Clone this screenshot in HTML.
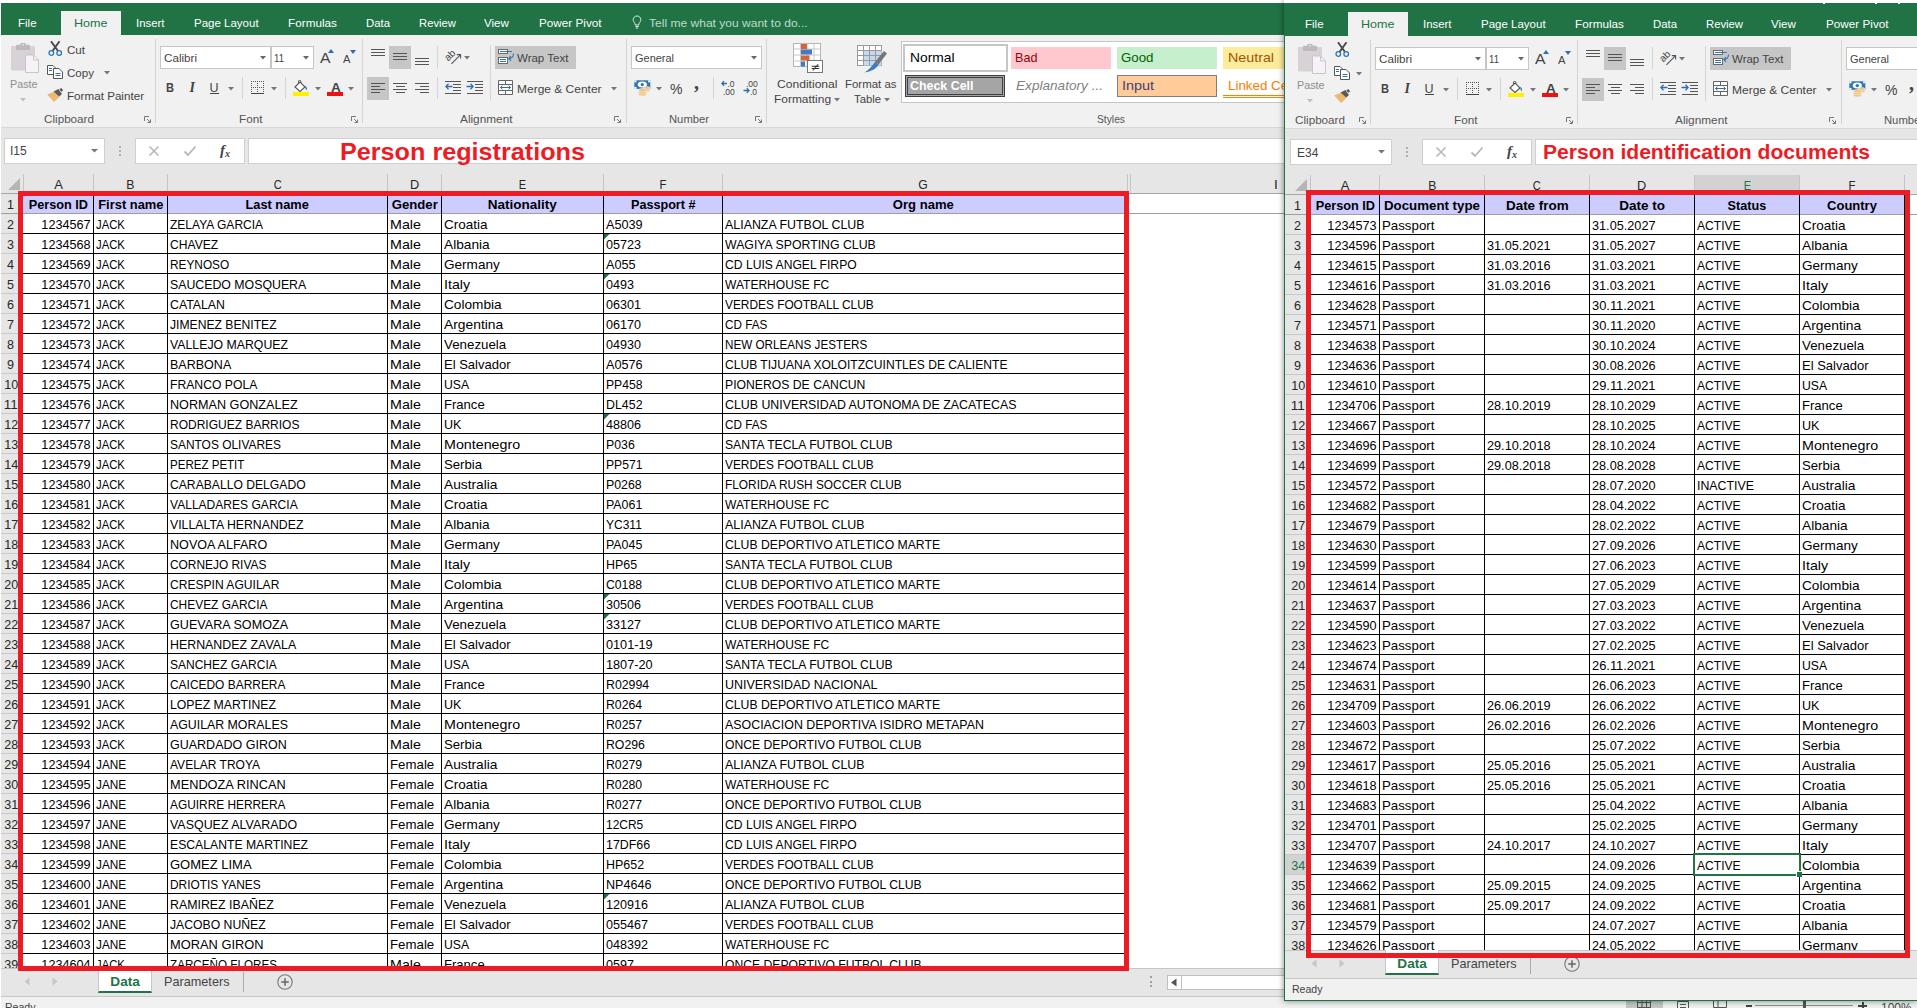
<!DOCTYPE html>
<html><head><meta charset="utf-8"><title>Excel</title><style>
html,body{margin:0;padding:0;background:#fff;}
body{width:1917px;height:1008px;overflow:hidden;position:relative;font-family:"Liberation Sans",sans-serif;color:#444;}
#L{position:absolute;left:0;top:0;width:1917px;height:1008px;overflow:hidden;}
#R{position:absolute;left:1284px;top:0;width:633px;height:1001px;overflow:hidden;box-shadow:0 0 6px rgba(0,0,0,.5);}
.b{position:absolute;box-sizing:border-box;}
.t{position:absolute;white-space:pre;transform-origin:0 50%;}
.c{color:#000;}
</style></head><body>
<div id="L">
<div class="b " style="left:0px;top:0px;width:1917px;height:3px;background:#fff;"></div>
<div class="b " style="left:0px;top:3px;width:1917px;height:32px;background:#217346;"></div>
<div class="b " style="left:0px;top:35px;width:1917px;height:92px;background:#f1f1f1;"></div>
<div class="b " style="left:0px;top:127px;width:1917px;height:1px;background:#d8d8d8;"></div>
<div class="b " style="left:0px;top:128px;width:1917px;height:66px;background:#e6e6e6;"></div>
<div class="b " style="left:61px;top:11px;width:60px;height:24px;background:#f1f1f1;"></div>
<span class="t " style="left:18.00px;top:17.00px;font-size:11.5px;line-height:12px;color:#fff;">File</span>
<span class="t " style="left:74.00px;top:17.00px;font-size:11.5px;line-height:12px;color:#217346;transform:scaleX(1.0922);">Home</span>
<span class="t " style="left:136.00px;top:17.00px;font-size:11.5px;line-height:12px;color:#fff;transform:scaleX(0.9918);">Insert</span>
<span class="t " style="left:194.00px;top:17.00px;font-size:11.5px;line-height:12px;color:#fff;">Page Layout</span>
<span class="t " style="left:287.50px;top:17.00px;font-size:11.5px;line-height:12px;color:#fff;transform:scaleX(1.0225);">Formulas</span>
<span class="t " style="left:365.50px;top:17.00px;font-size:11.5px;line-height:12px;color:#fff;transform:scaleX(0.9884);">Data</span>
<span class="t " style="left:418.50px;top:17.00px;font-size:11.5px;line-height:12px;color:#fff;transform:scaleX(0.9809);">Review</span>
<span class="t " style="left:484.00px;top:17.00px;font-size:11.5px;line-height:12px;color:#fff;transform:scaleX(1.0107);">View</span>
<span class="t " style="left:538.50px;top:17.00px;font-size:11.5px;line-height:12px;color:#fff;transform:scaleX(1.0188);">Power Pivot</span>
<svg class="b" style="left:632px;top:15px" width="10" height="14" viewBox="0 0 10 14"><path d="M5 1C2.8 1 1.2 2.6 1.2 4.7C1.2 6.3 2.2 7.2 2.8 8.2C3.1 8.8 3.2 9.4 3.2 10H6.8C6.8 9.4 6.9 8.8 7.2 8.2C7.8 7.2 8.8 6.3 8.8 4.7C8.8 2.6 7.2 1 5 1ZM3.4 11.5H6.6M3.8 13H6.2" fill="none" stroke="#dfeee6" stroke-width="1"/></svg>
<span class="t " style="left:648.50px;top:17.00px;font-size:11.5px;line-height:12px;color:#bddccb;transform:scaleX(1.0471);">Tell me what you want to do...</span>
<svg class="b" style="left:11px;top:43px" width="29" height="31" viewBox="0 0 29 31"><rect x="0" y="3" width="24" height="24.5" rx="1.2" fill="#d7d2d5"/><rect x="5" y="1.8" width="14" height="5.2" rx="0.8" fill="#bfb9bd"/><rect x="9.3" y="0" width="5.4" height="3" rx="1" fill="#bfb9bd"/><rect x="11" y="1.2" width="2" height="1.3" fill="#e6e2e4"/><path d="M14.5 12H22.5L27.5 17V29.5H14.5Z" fill="#f6f2f7" stroke="#c9c5ca"/><path d="M22.5 12V17H27.5" fill="none" stroke="#c9c5ca"/></svg>
<span class="t " style="left:9.50px;top:78.00px;font-size:11.5px;line-height:12px;color:#8e8e8e;transform:scaleX(0.9357);">Paste</span>
<svg class="b" style="left:19.5px;top:98px" width="6" height="4" viewBox="0 0 6 4"><path d="M0 0H6 L3 3.5Z" fill="#c0c0c0"/></svg>
<svg class="b" style="left:48px;top:41.2px" width="15" height="15" viewBox="0 0 15 15"><path d="M3 0.3L10 10M11.5 0.3L4.5 10" stroke="#484848" stroke-width="1.9" fill="none"/><circle cx="3.3" cy="12" r="2.3" fill="none" stroke="#2e75b6" stroke-width="1.3"/><circle cx="11.2" cy="12" r="2.3" fill="none" stroke="#2e75b6" stroke-width="1.3"/></svg>
<span class="t " style="left:66.50px;top:44.00px;font-size:11.5px;line-height:12px;color:#444444;transform:scaleX(1.0061);">Cut</span>
<svg class="b" style="left:47px;top:65px" width="16" height="14" viewBox="0 0 16 14"><path d="M0.5 0.5H6L8.5 3V9.5H0.5Z" fill="#fff" stroke="#555"/><path d="M6.5 3.5H12L15.5 7V13.5H6.5Z" fill="#fff" stroke="#555"/><path d="M2 3.5H5M2 5.5H5M8.5 8.5H13.5M8.5 10.5H13.5" stroke="#2e6db4" fill="none"/></svg>
<span class="t " style="left:66.50px;top:67.00px;font-size:11.5px;line-height:12px;color:#444444;transform:scaleX(1.0058);">Copy</span>
<svg class="b" style="left:103.5px;top:71px" width="6" height="4" viewBox="0 0 6 4"><path d="M0 0H6 L3 3.5Z" fill="#777"/></svg>
<svg class="b" style="left:47px;top:88px" width="17" height="15" viewBox="0 0 17 15"><path d="M0.2 6.6L8 3.2L12.6 8.8L7 14Z" fill="#ebb96f"/><path d="M6.6 3.4L11.3 0.9L15 6L12.2 8.6Z" fill="#5a5a5a"/><path d="M12.3 1.2L14.3 0L16.2 2.4L14.2 3.8Z" fill="#5a5a5a"/></svg>
<span class="t " style="left:66.50px;top:90.00px;font-size:11.5px;line-height:12px;color:#444444;transform:scaleX(1.0129);">Format Painter</span>
<span class="t " style="left:43.50px;top:113.00px;font-size:11.5px;line-height:12px;color:#555;transform:scaleX(1.0159);">Clipboard</span>
<svg class="b" style="left:144px;top:116px" width="7" height="7" viewBox="0 0 7 7"><path d="M0.5 5V0.5H5M3 3L6 6M6.5 3.5V6.5H3.5" fill="none" stroke="#777" stroke-width="1"/></svg>
<div class="b " style="left:155px;top:39px;width:1px;height:84px;background:#d4d4d4;"></div>
<div class="b " style="left:160px;top:46px;width:111px;height:23px;background:#fff;border:1px solid #c6c6c6;"></div>
<span class="t " style="left:163.50px;top:52.00px;font-size:11.5px;line-height:12px;color:#444444;transform:scaleX(1.0120);">Calibri</span>
<svg class="b" style="left:259.5px;top:56px" width="6" height="4" viewBox="0 0 6 4"><path d="M0 0H6 L3 3.5Z" fill="#666"/></svg>
<div class="b " style="left:271px;top:46px;width:43px;height:23px;background:#fff;border:1px solid #c6c6c6;"></div>
<span class="t " style="left:274.00px;top:52.00px;font-size:11.5px;line-height:12px;color:#444444;transform:scaleX(0.8388);">11</span>
<svg class="b" style="left:302.5px;top:56px" width="6" height="4" viewBox="0 0 6 4"><path d="M0 0H6 L3 3.5Z" fill="#666"/></svg>
<span class="t " style="left:319.50px;top:50.00px;font-size:14.5px;line-height:16px;color:#444;transform:scaleX(1.0856);">A</span>
<svg class="b" style="left:327.5px;top:49px" width="6" height="4" viewBox="0 0 6 4"><path d="M0 4H6L3 0Z" fill="#2e6db4"/></svg>
<span class="t " style="left:343.00px;top:53.00px;font-size:11.5px;line-height:12px;color:#444;transform:scaleX(0.9776);">A</span>
<svg class="b" style="left:349.5px;top:49.5px" width="6" height="4" viewBox="0 0 6 4"><path d="M0 0H6L3 4Z" fill="#2e6db4"/></svg>
<span class="t " style="left:166.00px;top:81.00px;font-size:12.5px;line-height:14px;color:#444;font-weight:bold;transform:scaleX(0.8858);">B</span>
<span class="t " style="left:189.50px;top:80.00px;font-size:14px;line-height:16px;color:#444;font-weight:bold;font-style:italic;font-family:'Liberation Serif',serif;">I</span>
<span class="t " style="left:209.50px;top:81.00px;font-size:12.5px;line-height:14px;color:#444;">U</span>
<div class="b " style="left:209.5px;top:93px;width:9px;height:1px;background:#444;"></div>
<svg class="b" style="left:227.5px;top:86.5px" width="6" height="4" viewBox="0 0 6 4"><path d="M0 0H6 L3 3.5Z" fill="#777"/></svg>
<div class="b " style="left:242px;top:77px;width:1px;height:22px;background:#d4d4d4;"></div>
<svg class="b" style="left:250px;top:80px" width="15" height="15" viewBox="0 0 15 15"><g shape-rendering="crispEdges"><path d="M1 1.5H14M1 7.5H14M1.5 1V13M7.5 1V13M13.5 1V13" stroke="#555" stroke-dasharray="1 1" fill="none"/><path d="M1 13.5H14" stroke="#444" stroke-width="1"/></g></svg>
<svg class="b" style="left:271px;top:86.5px" width="6" height="4" viewBox="0 0 6 4"><path d="M0 0H6 L3 3.5Z" fill="#777"/></svg>
<div class="b " style="left:285px;top:77px;width:1px;height:22px;background:#d4d4d4;"></div>
<svg class="b" style="left:292px;top:79.5px" width="17" height="12" viewBox="0 0 17 12"><path d="M3 7L8 2L13 7L8 11.5Z" fill="#fff" stroke="#555" stroke-width="1.1"/><path d="M6.5 3.5V1.2C6.5 0 8.8 0 8.8 1.2V3" fill="none" stroke="#555"/><path d="M13.2 5.5C14.8 7 15.5 8.5 14.5 10.2C13.5 9.5 13.3 7.5 13.2 5.5Z" fill="#2e6db4"/></svg>
<div class="b " style="left:292.5px;top:92px;width:16px;height:4px;background:#ffef00;"></div>
<svg class="b" style="left:314.5px;top:86.5px" width="6" height="4" viewBox="0 0 6 4"><path d="M0 0H6 L3 3.5Z" fill="#777"/></svg>
<span class="t " style="left:330.50px;top:80.00px;font-size:13.5px;line-height:15px;color:#444;font-weight:bold;transform:scaleX(1.0051);">A</span>
<div class="b " style="left:327px;top:92px;width:16px;height:4px;background:#ee1111;"></div>
<svg class="b" style="left:348px;top:86.5px" width="6" height="4" viewBox="0 0 6 4"><path d="M0 0H6 L3 3.5Z" fill="#777"/></svg>
<span class="t " style="left:239.00px;top:113.00px;font-size:11.5px;line-height:12px;color:#555;transform:scaleX(1.0217);">Font</span>
<svg class="b" style="left:351px;top:116px" width="7" height="7" viewBox="0 0 7 7"><path d="M0.5 5V0.5H5M3 3L6 6M6.5 3.5V6.5H3.5" fill="none" stroke="#777" stroke-width="1"/></svg>
<div class="b " style="left:362px;top:39px;width:1px;height:84px;background:#d4d4d4;"></div>
<div class="b " style="left:371px;top:49px;width:14px;height:1px;background:#555;"></div>
<div class="b " style="left:371px;top:52px;width:14px;height:1px;background:#555;"></div>
<div class="b " style="left:371px;top:55px;width:14px;height:1px;background:#555;"></div>
<div class="b " style="left:389px;top:46px;width:22px;height:23px;background:#c6c6c6;"></div>
<div class="b " style="left:393px;top:53px;width:14px;height:1px;background:#555;"></div>
<div class="b " style="left:393px;top:56px;width:14px;height:1px;background:#555;"></div>
<div class="b " style="left:393px;top:59px;width:14px;height:1px;background:#555;"></div>
<div class="b " style="left:415px;top:58px;width:14px;height:1px;background:#555;"></div>
<div class="b " style="left:415px;top:61px;width:14px;height:1px;background:#555;"></div>
<div class="b " style="left:415px;top:64px;width:14px;height:1px;background:#555;"></div>
<div class="b " style="left:437px;top:46px;width:1px;height:22px;background:#d4d4d4;"></div>
<svg class="b" style="left:444px;top:48px" width="18" height="17" viewBox="0 0 18 17"><text transform="translate(4.2,13.6) rotate(-45)" font-family="Liberation Sans,sans-serif" font-size="10" fill="#444">ab</text><path d="M7.4 15.8L16.6 6.6M12.8 6.6H16.6V10.4" stroke="#555" stroke-width="1.1" fill="none"/></svg>
<svg class="b" style="left:464px;top:56px" width="6" height="4" viewBox="0 0 6 4"><path d="M0 0H6 L3 3.5Z" fill="#777"/></svg>
<div class="b " style="left:490px;top:45px;width:1px;height:55px;background:#d4d4d4;"></div>
<div class="b " style="left:495px;top:46px;width:81px;height:23px;background:#c6c6c6;"></div>
<svg class="b" style="left:498px;top:49px" width="17" height="15" viewBox="0 0 17 15"><rect x="0.5" y="0.5" width="9" height="4" fill="#fff" stroke="#6a6a6a"/><rect x="0.5" y="8.5" width="9" height="6" fill="#fff" stroke="#6a6a6a"/><path d="M2 2.5H13.8M2 10.5H8M2 12.5H8" stroke="#2e75b6" fill="none"/><path d="M15.5 4.5C15.5 8 13.5 9.5 10.8 9.5M13 7.2L10.7 9.5L13 11.8" stroke="#2e75b6" stroke-width="1.1" fill="none"/></svg>
<span class="t " style="left:517.00px;top:52.00px;font-size:11.5px;line-height:12px;color:#444444;">Wrap Text</span>
<div class="b " style="left:367px;top:77px;width:22px;height:23px;background:#c6c6c6;"></div>
<div class="b " style="left:371px;top:83px;width:14px;height:1px;background:#555;"></div>
<div class="b " style="left:393px;top:83px;width:14px;height:1px;background:#555;"></div>
<div class="b " style="left:415px;top:83px;width:14px;height:1px;background:#555;"></div>
<div class="b " style="left:371px;top:86px;width:9px;height:1px;background:#555;"></div>
<div class="b " style="left:395.5px;top:86px;width:9px;height:1px;background:#555;"></div>
<div class="b " style="left:420px;top:86px;width:9px;height:1px;background:#555;"></div>
<div class="b " style="left:371px;top:89px;width:14px;height:1px;background:#555;"></div>
<div class="b " style="left:393px;top:89px;width:14px;height:1px;background:#555;"></div>
<div class="b " style="left:415px;top:89px;width:14px;height:1px;background:#555;"></div>
<div class="b " style="left:371px;top:92px;width:9px;height:1px;background:#555;"></div>
<div class="b " style="left:395.5px;top:92px;width:9px;height:1px;background:#555;"></div>
<div class="b " style="left:420px;top:92px;width:9px;height:1px;background:#555;"></div>
<div class="b " style="left:437px;top:77px;width:1px;height:22px;background:#d4d4d4;"></div>
<div class="b " style="left:444.5px;top:81px;width:16px;height:1px;background:#555;"></div>
<div class="b " style="left:452.5px;top:84px;width:8px;height:1px;background:#555;"></div>
<div class="b " style="left:452.5px;top:87px;width:8px;height:1px;background:#555;"></div>
<div class="b " style="left:452.5px;top:90px;width:8px;height:1px;background:#555;"></div>
<div class="b " style="left:444.5px;top:93px;width:16px;height:1px;background:#555;"></div>
<div class="b " style="left:466.5px;top:81px;width:16px;height:1px;background:#555;"></div>
<div class="b " style="left:474.5px;top:84px;width:8px;height:1px;background:#555;"></div>
<div class="b " style="left:474.5px;top:87px;width:8px;height:1px;background:#555;"></div>
<div class="b " style="left:474.5px;top:90px;width:8px;height:1px;background:#555;"></div>
<div class="b " style="left:466.5px;top:93px;width:16px;height:1px;background:#555;"></div>
<svg class="b" style="left:444.5px;top:83px" width="8" height="7" viewBox="0 0 8 7"><path d="M7.5 3.5H1M3.5 0.8L0.8 3.5L3.5 6.2" stroke="#2e6db4" stroke-width="1.3" fill="none"/></svg>
<svg class="b" style="left:466px;top:83px" width="8" height="7" viewBox="0 0 8 7"><path d="M0.5 3.5H7M4.5 0.8L7.2 3.5L4.5 6.2" stroke="#2e6db4" stroke-width="1.3" fill="none"/></svg>
<svg class="b" style="left:497.5px;top:80px" width="16" height="15" viewBox="0 0 16 15"><path d="M0.5 0.5H14.5V14.5H0.5ZM0.5 4.5H14.5M0.5 10.5H14.5M7.5 0.5V4.5M7.5 10.5V14.5" fill="#fff" stroke="#666"/><path d="M2.5 7.5H12.5M4.5 5.7L2.5 7.5L4.5 9.3M10.5 5.7L12.5 7.5L10.5 9.3" stroke="#2e6db4" fill="none"/></svg>
<span class="t " style="left:517.00px;top:83.00px;font-size:11.5px;line-height:12px;color:#444444;transform:scaleX(1.0416);">Merge &amp; Center</span>
<svg class="b" style="left:610.5px;top:86.5px" width="6" height="4" viewBox="0 0 6 4"><path d="M0 0H6 L3 3.5Z" fill="#777"/></svg>
<span class="t " style="left:460.00px;top:113.00px;font-size:11.5px;line-height:12px;color:#555;transform:scaleX(1.0269);">Alignment</span>
<svg class="b" style="left:614px;top:116px" width="7" height="7" viewBox="0 0 7 7"><path d="M0.5 5V0.5H5M3 3L6 6M6.5 3.5V6.5H3.5" fill="none" stroke="#777" stroke-width="1"/></svg>
<div class="b " style="left:626px;top:39px;width:1px;height:84px;background:#d4d4d4;"></div>
<div class="b " style="left:631px;top:46px;width:131px;height:23px;background:#fff;border:1px solid #c6c6c6;"></div>
<span class="t " style="left:634.50px;top:52.00px;font-size:11.5px;line-height:12px;color:#444444;transform:scaleX(0.9538);">General</span>
<svg class="b" style="left:751px;top:56px" width="6" height="4" viewBox="0 0 6 4"><path d="M0 0H6 L3 3.5Z" fill="#666"/></svg>
<svg class="b" style="left:633.5px;top:80px" width="17" height="17" viewBox="0 0 17 17"><rect x="0.3" y="0.3" width="16" height="8.6" fill="#2e75b6"/><ellipse cx="8.3" cy="4.6" rx="4.6" ry="3" fill="#fff"/><circle cx="8.3" cy="4.6" r="1.7" fill="#2e75b6"/><rect x="0.3" y="0.3" width="2.2" height="2" fill="#fff"/><rect x="14.1" y="0.3" width="2.2" height="2" fill="#fff"/><rect x="0.3" y="6.9" width="2.2" height="2" fill="#fff"/><g fill="#f0c27b" stroke="#f1f1f1" stroke-width="0.6"><ellipse cx="12.5" cy="10" rx="3.6" ry="1.5"/><ellipse cx="12.5" cy="8" rx="3.6" ry="1.5"/><ellipse cx="8.5" cy="14.3" rx="4" ry="1.6"/><ellipse cx="8.5" cy="12.2" rx="4" ry="1.6"/><ellipse cx="8.5" cy="10.1" rx="4" ry="1.6"/></g></svg>
<svg class="b" style="left:655.5px;top:87px" width="6" height="4" viewBox="0 0 6 4"><path d="M0 0H6 L3 3.5Z" fill="#777"/></svg>
<span class="t " style="left:670.00px;top:80.00px;font-size:15px;line-height:17px;color:#444;transform:scaleX(0.9368);">%</span>
<span class="t " style="left:694.00px;top:71.00px;font-size:20px;line-height:22px;color:#444;font-weight:bold;font-family:'Liberation Serif',serif;">,</span>
<div class="b " style="left:713px;top:77px;width:1px;height:22px;background:#d4d4d4;"></div>
<svg class="b" style="left:720.5px;top:80px" width="16" height="15" viewBox="0 0 16 15"><path d="M0.8 3.5H6M3 1.2L0.8 3.5L3 5.8" stroke="#2e6db4" stroke-width="1.3" fill="none"/><text x="6.5" y="7" font-family="Liberation Sans,sans-serif" font-size="8.5" fill="#444">.0</text><text x="2" y="14.5" font-family="Liberation Sans,sans-serif" font-size="8.5" fill="#444">.00</text></svg>
<svg class="b" style="left:742.5px;top:80px" width="16" height="15" viewBox="0 0 16 15"><text x="3" y="7" font-family="Liberation Sans,sans-serif" font-size="8.5" fill="#444">.00</text><path d="M0.5 10.5H6M3.8 8.2L6 10.5L3.8 12.8" stroke="#2e6db4" stroke-width="1.3" fill="none"/><text x="7" y="14.5" font-family="Liberation Sans,sans-serif" font-size="8.5" fill="#444">.0</text></svg>
<span class="t " style="left:668.50px;top:113.00px;font-size:11.5px;line-height:12px;color:#555;transform:scaleX(0.9782);">Number</span>
<svg class="b" style="left:755px;top:116px" width="7" height="7" viewBox="0 0 7 7"><path d="M0.5 5V0.5H5M3 3L6 6M6.5 3.5V6.5H3.5" fill="none" stroke="#777" stroke-width="1"/></svg>
<div class="b " style="left:766px;top:39px;width:1px;height:84px;background:#d4d4d4;"></div>
<svg class="b" style="left:792.5px;top:43px" width="31" height="30" viewBox="0 0 31 30"><rect x="0.5" y="0.5" width="27" height="23" fill="#fff" stroke="#b5b5b5"/><path d="M7.5 0.5V23.5M14 0.5V23.5M21 0.5V23.5M0.5 6H27.5M0.5 12H27.5M0.5 18H27.5" stroke="#c8c8c8" fill="none"/><rect x="8" y="1" width="6" height="5" fill="#d9623b"/><rect x="8" y="6.5" width="11" height="5" fill="#3f7cc0"/><rect x="8" y="12.5" width="8.5" height="5" fill="#d9623b"/><rect x="8" y="18.5" width="4" height="5" fill="#3f7cc0"/><rect x="14.5" y="17.5" width="15" height="12" fill="#fff" stroke="#777"/><text x="17.3" y="28" font-family="DejaVu Sans,sans-serif" font-size="12" fill="#333">≠</text></svg>
<span class="t " style="left:776.50px;top:78.00px;font-size:11.5px;line-height:12px;color:#444444;transform:scaleX(1.0516);">Conditional</span>
<span class="t " style="left:773.50px;top:93.00px;font-size:11.5px;line-height:12px;color:#444444;transform:scaleX(1.0375);">Formatting</span>
<svg class="b" style="left:834px;top:98px" width="6" height="4" viewBox="0 0 6 4"><path d="M0 0H6 L3 3.5Z" fill="#777"/></svg>
<svg class="b" style="left:857px;top:45px" width="31" height="29" viewBox="0 0 31 29"><rect x="0.5" y="0.5" width="24" height="20" fill="#fff" stroke="#9a9a9a"/><rect x="6.5" y="5.5" width="18" height="15" fill="#c5d9f1"/><path d="M6.5 0.5V20.5M12.5 0.5V20.5M18.5 0.5V20.5M0.5 5.5H24.5M0.5 10.5H24.5M0.5 15.5H24.5" stroke="#9a9a9a" fill="none"/><path d="M18 17L27 6L30 8.5L21.5 19.5Z" fill="#777"/><path d="M18 17L21.5 19.5C20 23.5 14 26.5 7.5 27.5C12 25 15 21 18 17Z" fill="#3f7cc0"/></svg>
<span class="t " style="left:845.00px;top:78.00px;font-size:11.5px;line-height:12px;color:#444444;transform:scaleX(0.9955);">Format as</span>
<span class="t " style="left:854.00px;top:93.00px;font-size:11.5px;line-height:12px;color:#444444;transform:scaleX(0.9824);">Table</span>
<svg class="b" style="left:883.5px;top:98px" width="6" height="4" viewBox="0 0 6 4"><path d="M0 0H6 L3 3.5Z" fill="#777"/></svg>
<div class="b " style="left:901px;top:41px;width:400px;height:62px;background:#fff;border:1px solid #c6c6c6;"></div>
<div class="b " style="left:903px;top:44px;width:105px;height:28px;background:#fff;border:2px solid #c6c6c6;"></div>
<span class="t " style="left:909.50px;top:50.00px;font-size:13px;line-height:15px;color:#000;transform:scaleX(1.0619);">Normal</span>
<div class="b " style="left:1011px;top:47px;width:100px;height:22px;background:#ffc7ce;"></div>
<span class="t " style="left:1015.00px;top:50.00px;font-size:13px;line-height:15px;color:#9c0006;transform:scaleX(0.9723);">Bad</span>
<div class="b " style="left:1117px;top:47px;width:100px;height:22px;background:#c6efce;"></div>
<span class="t " style="left:1121.00px;top:50.00px;font-size:13px;line-height:15px;color:#006100;transform:scaleX(1.0216);">Good</span>
<div class="b " style="left:1223px;top:47px;width:100px;height:22px;background:#ffeb9c;"></div>
<span class="t " style="left:1227.50px;top:50.00px;font-size:13px;line-height:15px;color:#9c5700;transform:scaleX(1.0973);">Neutral</span>
<div class="b " style="left:905px;top:75px;width:100px;height:22px;background:#a5a5a5;border:3px double #3f3f3f;"></div>
<span class="t " style="left:909.50px;top:78.00px;font-size:13px;line-height:15px;color:#fff;font-weight:bold;transform:scaleX(0.9551);">Check Cell</span>
<span class="t " style="left:1015.50px;top:78.00px;font-size:13px;line-height:15px;color:#7f7f7f;font-style:italic;transform:scaleX(1.0468);">Explanatory ...</span>
<div class="b " style="left:1117px;top:75px;width:100px;height:22px;background:#ffcc99;border:1px solid #7f7f7f;"></div>
<span class="t " style="left:1121.50px;top:78.00px;font-size:13px;line-height:15px;color:#3f3f76;transform:scaleX(1.1064);">Input</span>
<span class="t " style="left:1227.50px;top:78.00px;font-size:13px;line-height:15px;color:#fa7d00;transform:scaleX(1.0257);">Linked Cell</span>
<div class="b " style="left:1223px;top:95px;width:100px;height:3px;border-top:1px solid #ff8001;border-bottom:1px solid #ff8001;"></div>
<span class="t " style="left:1096.50px;top:113.00px;font-size:11.5px;line-height:12px;color:#555;transform:scaleX(0.8942);">Styles</span>
<div class="b " style="left:4px;top:138px;width:101px;height:26px;background:#fff;border:1px solid #d0d0d0;"></div>
<span class="t " style="left:10.00px;top:144.00px;font-size:12px;line-height:14px;color:#444;">I15</span>
<svg class="b" style="left:91px;top:148.5px" width="7" height="4" viewBox="0 0 7 4"><path d="M0 0H7 L3.5 3.5Z" fill="#777"/></svg>
<div class="b " style="left:119px;top:146px;width:2px;height:2px;background:#b0b0b0;"></div>
<div class="b " style="left:119px;top:150px;width:2px;height:2px;background:#b0b0b0;"></div>
<div class="b " style="left:119px;top:154px;width:2px;height:2px;background:#b0b0b0;"></div>
<div class="b " style="left:135px;top:138px;width:110px;height:26px;background:#fff;border:1px solid #d0d0d0;"></div>
<svg class="b" style="left:148px;top:145px" width="12" height="12" viewBox="0 0 12 12"><path d="M1.5 1.5L10.5 10.5M10.5 1.5L1.5 10.5" stroke="#b7b7b7" stroke-width="1.6" fill="none"/></svg>
<svg class="b" style="left:183px;top:145px" width="14" height="12" viewBox="0 0 14 12"><path d="M1.5 6.5L5 10L12.5 1.5" stroke="#b7b7b7" stroke-width="1.8" fill="none"/></svg>
<span class="t " style="left:220.00px;top:142.00px;font-size:15px;line-height:17px;color:#444;font-weight:bold;font-style:italic;font-family:'Liberation Serif',serif;">f</span>
<span class="t " style="left:225.00px;top:148.00px;font-size:10px;line-height:11px;color:#444;font-weight:bold;font-style:italic;font-family:'Liberation Serif',serif;">x</span>
<div class="b " style="left:248px;top:138px;width:1054px;height:26px;background:#fff;border:1px solid #d0d0d0;"></div>
<span class="t " style="left:339.80px;top:139.00px;font-size:23px;line-height:26px;color:#ed1c24;font-weight:bold;transform:scaleX(1.0952);">Person registrations</span>
<div class="b " style="left:23px;top:194px;width:1894px;height:774px;background:#fff;"></div>
<div class="b " style="left:0px;top:194px;width:23px;height:774px;background:#e6e6e6;"></div>
<div class="b " style="left:23px;top:174px;width:1px;height:19px;background:#c4c4c4;"></div>
<div class="b " style="left:93px;top:174px;width:1px;height:19px;background:#c4c4c4;"></div>
<div class="b " style="left:167px;top:174px;width:1px;height:19px;background:#c4c4c4;"></div>
<div class="b " style="left:387px;top:174px;width:1px;height:19px;background:#c4c4c4;"></div>
<div class="b " style="left:441px;top:174px;width:1px;height:19px;background:#c4c4c4;"></div>
<div class="b " style="left:603px;top:174px;width:1px;height:19px;background:#c4c4c4;"></div>
<div class="b " style="left:722px;top:174px;width:1px;height:19px;background:#c4c4c4;"></div>
<div class="b " style="left:1127px;top:174px;width:1px;height:19px;background:#c4c4c4;"></div>
<div class="b " style="left:1130px;top:174px;width:1px;height:19px;background:#c4c4c4;"></div>
<div class="b " style="left:0px;top:193px;width:1917px;height:1px;background:#a6a6a6;"></div>
<svg class="b" style="left:8px;top:178px" width="12" height="12" viewBox="0 0 12 12"><path d="M12 0V12H0Z" fill="#b5b5b5"/></svg>
<span class="t " style="left:54.16px;top:177.00px;font-size:13px;line-height:15px;color:#262626;transform-origin:50% 50%;">A</span>
<span class="t " style="left:126.16px;top:177.00px;font-size:13px;line-height:15px;color:#262626;transform:scaleX(0.9405);transform-origin:50% 50%;">B</span>
<span class="t " style="left:272.80px;top:177.00px;font-size:13px;line-height:15px;color:#262626;transform:scaleX(0.8519);transform-origin:50% 50%;">C</span>
<span class="t " style="left:409.80px;top:177.00px;font-size:13px;line-height:15px;color:#262626;transform:scaleX(0.9834);transform-origin:50% 50%;">D</span>
<span class="t " style="left:518.16px;top:177.00px;font-size:13px;line-height:15px;color:#262626;transform:scaleX(0.8450);transform-origin:50% 50%;">E</span>
<span class="t " style="left:659.03px;top:177.00px;font-size:13px;line-height:15px;color:#262626;transform:scaleX(0.8681);transform-origin:50% 50%;">F</span>
<span class="t " style="left:918.45px;top:177.00px;font-size:13px;line-height:15px;color:#262626;transform:scaleX(0.9366);transform-origin:50% 50%;">G</span>
<span class="t " style="left:1273.70px;top:177.00px;font-size:13px;line-height:15px;color:#262626;transform:scaleX(1.0476);transform-origin:50% 50%;">I</span>
<div class="b " style="left:23px;top:194px;width:1101px;height:19px;background:#ccccff;"></div>
<span class="t " style="left:28.16px;top:197.00px;font-size:13px;line-height:15px;color:#000;font-weight:bold;transform:scaleX(0.9784);transform-origin:50% 50%;">Person ID</span>
<span class="t " style="left:97.62px;top:197.00px;font-size:13px;line-height:15px;color:#000;font-weight:bold;transform:scaleX(0.9936);transform-origin:50% 50%;">First name</span>
<span class="t " style="left:245.34px;top:197.00px;font-size:13px;line-height:15px;color:#000;font-weight:bold;transform:scaleX(0.9852);transform-origin:50% 50%;">Last name</span>
<span class="t " style="left:391.74px;top:197.00px;font-size:13px;line-height:15px;color:#000;font-weight:bold;transform:scaleX(1.0124);transform-origin:50% 50%;">Gender</span>
<span class="t " style="left:489.27px;top:197.00px;font-size:13px;line-height:15px;color:#000;font-weight:bold;transform:scaleX(1.0402);transform-origin:50% 50%;">Nationality</span>
<span class="t " style="left:629.76px;top:197.00px;font-size:13px;line-height:15px;color:#000;font-weight:bold;transform:scaleX(0.9711);transform-origin:50% 50%;">Passport #</span>
<span class="t " style="left:893.16px;top:197.00px;font-size:13px;line-height:15px;color:#000;font-weight:bold;transform:scaleX(1.0051);transform-origin:50% 50%;">Org name</span>
<div class="b " style="left:0px;top:213px;width:23px;height:1px;background:#c8c8c8;"></div>
<div class="b " style="left:23px;top:213px;width:1101px;height:1px;background:#000;"></div>
<span class="t " style="left:7.18px;top:197.00px;font-size:13px;line-height:15px;color:#262626;transform:scaleX(0.9676);transform-origin:50% 50%;">1</span>
<div class="b " style="left:0px;top:233px;width:23px;height:1px;background:#c8c8c8;"></div>
<div class="b " style="left:23px;top:233px;width:1101px;height:1px;background:#000;"></div>
<span class="t " style="left:7.18px;top:217.00px;font-size:13px;line-height:15px;color:#262626;transform:scaleX(0.9676);transform-origin:50% 50%;">2</span>
<span class="t " style="left:40.16px;top:217.00px;font-size:13px;line-height:15px;color:#000;transform:scaleX(0.9735);transform-origin:100% 50%;">1234567</span>
<span class="t " style="left:96.00px;top:217.00px;font-size:13px;line-height:15px;color:#000;transform:scaleX(0.8693);">JACK</span>
<span class="t " style="left:170.00px;top:217.00px;font-size:13px;line-height:15px;color:#000;transform:scaleX(0.9252);">ZELAYA GARCIA</span>
<span class="t " style="left:390.00px;top:217.00px;font-size:13px;line-height:15px;color:#000;transform:scaleX(1.0970);">Male</span>
<span class="t " style="left:444.00px;top:217.00px;font-size:13px;line-height:15px;color:#000;transform:scaleX(1.0376);">Croatia</span>
<span class="t " style="left:606.00px;top:217.00px;font-size:13px;line-height:15px;color:#000;transform:scaleX(0.9751);">A5039</span>
<span class="t " style="left:725.00px;top:217.00px;font-size:13px;line-height:15px;color:#000;transform:scaleX(0.9546);">ALIANZA FUTBOL CLUB</span>
<div class="b " style="left:0px;top:253px;width:23px;height:1px;background:#c8c8c8;"></div>
<div class="b " style="left:23px;top:253px;width:1101px;height:1px;background:#000;"></div>
<span class="t " style="left:7.18px;top:237.00px;font-size:13px;line-height:15px;color:#262626;transform:scaleX(0.9676);transform-origin:50% 50%;">3</span>
<span class="t " style="left:40.16px;top:237.00px;font-size:13px;line-height:15px;color:#000;transform:scaleX(0.9735);transform-origin:100% 50%;">1234568</span>
<span class="t " style="left:96.00px;top:237.00px;font-size:13px;line-height:15px;color:#000;transform:scaleX(0.8693);">JACK</span>
<span class="t " style="left:170.00px;top:237.00px;font-size:13px;line-height:15px;color:#000;transform:scaleX(0.9303);">CHAVEZ</span>
<span class="t " style="left:390.00px;top:237.00px;font-size:13px;line-height:15px;color:#000;transform:scaleX(1.0970);">Male</span>
<span class="t " style="left:444.00px;top:237.00px;font-size:13px;line-height:15px;color:#000;transform:scaleX(1.0526);">Albania</span>
<span class="t " style="left:606.00px;top:237.00px;font-size:13px;line-height:15px;color:#000;transform:scaleX(0.9676);">05723</span>
<span class="t " style="left:725.00px;top:237.00px;font-size:13px;line-height:15px;color:#000;transform:scaleX(0.9456);">WAGIYA SPORTING CLUB</span>
<svg class="b" style="left:604px;top:234px" width="6" height="6" viewBox="0 0 6 6"><path d="M0 0H5.5L0 5.5Z" fill="#1e7145"/></svg>
<div class="b " style="left:0px;top:273px;width:23px;height:1px;background:#c8c8c8;"></div>
<div class="b " style="left:23px;top:273px;width:1101px;height:1px;background:#000;"></div>
<span class="t " style="left:7.18px;top:257.00px;font-size:13px;line-height:15px;color:#262626;transform:scaleX(0.9676);transform-origin:50% 50%;">4</span>
<span class="t " style="left:40.16px;top:257.00px;font-size:13px;line-height:15px;color:#000;transform:scaleX(0.9735);transform-origin:100% 50%;">1234569</span>
<span class="t " style="left:96.00px;top:257.00px;font-size:13px;line-height:15px;color:#000;transform:scaleX(0.8693);">JACK</span>
<span class="t " style="left:170.00px;top:257.00px;font-size:13px;line-height:15px;color:#000;transform:scaleX(0.9111);">REYNOSO</span>
<span class="t " style="left:390.00px;top:257.00px;font-size:13px;line-height:15px;color:#000;transform:scaleX(1.0970);">Male</span>
<span class="t " style="left:444.00px;top:257.00px;font-size:13px;line-height:15px;color:#000;transform:scaleX(1.0424);">Germany</span>
<span class="t " style="left:606.00px;top:257.00px;font-size:13px;line-height:15px;color:#000;transform:scaleX(0.9769);">A055</span>
<span class="t " style="left:725.00px;top:257.00px;font-size:13px;line-height:15px;color:#000;transform:scaleX(0.9330);">CD LUIS ANGEL FIRPO</span>
<div class="b " style="left:0px;top:293px;width:23px;height:1px;background:#c8c8c8;"></div>
<div class="b " style="left:23px;top:293px;width:1101px;height:1px;background:#000;"></div>
<span class="t " style="left:7.18px;top:277.00px;font-size:13px;line-height:15px;color:#262626;transform:scaleX(0.9676);transform-origin:50% 50%;">5</span>
<span class="t " style="left:40.16px;top:277.00px;font-size:13px;line-height:15px;color:#000;transform:scaleX(0.9735);transform-origin:100% 50%;">1234570</span>
<span class="t " style="left:96.00px;top:277.00px;font-size:13px;line-height:15px;color:#000;transform:scaleX(0.8693);">JACK</span>
<span class="t " style="left:170.00px;top:277.00px;font-size:13px;line-height:15px;color:#000;transform:scaleX(0.9478);">SAUCEDO MOSQUERA</span>
<span class="t " style="left:390.00px;top:277.00px;font-size:13px;line-height:15px;color:#000;transform:scaleX(1.0970);">Male</span>
<span class="t " style="left:444.00px;top:277.00px;font-size:13px;line-height:15px;color:#000;transform:scaleX(1.0924);">Italy</span>
<span class="t " style="left:606.00px;top:277.00px;font-size:13px;line-height:15px;color:#000;transform:scaleX(0.9676);">0493</span>
<span class="t " style="left:725.00px;top:277.00px;font-size:13px;line-height:15px;color:#000;transform:scaleX(0.9251);">WATERHOUSE FC</span>
<svg class="b" style="left:604px;top:274px" width="6" height="6" viewBox="0 0 6 6"><path d="M0 0H5.5L0 5.5Z" fill="#1e7145"/></svg>
<div class="b " style="left:0px;top:313px;width:23px;height:1px;background:#c8c8c8;"></div>
<div class="b " style="left:23px;top:313px;width:1101px;height:1px;background:#000;"></div>
<span class="t " style="left:7.18px;top:297.00px;font-size:13px;line-height:15px;color:#262626;transform:scaleX(0.9676);transform-origin:50% 50%;">6</span>
<span class="t " style="left:40.16px;top:297.00px;font-size:13px;line-height:15px;color:#000;transform:scaleX(0.9735);transform-origin:100% 50%;">1234571</span>
<span class="t " style="left:96.00px;top:297.00px;font-size:13px;line-height:15px;color:#000;transform:scaleX(0.8693);">JACK</span>
<span class="t " style="left:170.00px;top:297.00px;font-size:13px;line-height:15px;color:#000;transform:scaleX(0.9475);">CATALAN</span>
<span class="t " style="left:390.00px;top:297.00px;font-size:13px;line-height:15px;color:#000;transform:scaleX(1.0970);">Male</span>
<span class="t " style="left:444.00px;top:297.00px;font-size:13px;line-height:15px;color:#000;transform:scaleX(1.0509);">Colombia</span>
<span class="t " style="left:606.00px;top:297.00px;font-size:13px;line-height:15px;color:#000;transform:scaleX(0.9676);">06301</span>
<span class="t " style="left:725.00px;top:297.00px;font-size:13px;line-height:15px;color:#000;transform:scaleX(0.9134);">VERDES FOOTBALL CLUB</span>
<div class="b " style="left:0px;top:333px;width:23px;height:1px;background:#c8c8c8;"></div>
<div class="b " style="left:23px;top:333px;width:1101px;height:1px;background:#000;"></div>
<span class="t " style="left:7.18px;top:317.00px;font-size:13px;line-height:15px;color:#262626;transform:scaleX(0.9676);transform-origin:50% 50%;">7</span>
<span class="t " style="left:40.16px;top:317.00px;font-size:13px;line-height:15px;color:#000;transform:scaleX(0.9735);transform-origin:100% 50%;">1234572</span>
<span class="t " style="left:96.00px;top:317.00px;font-size:13px;line-height:15px;color:#000;transform:scaleX(0.8693);">JACK</span>
<span class="t " style="left:170.00px;top:317.00px;font-size:13px;line-height:15px;color:#000;transform:scaleX(0.9344);">JIMENEZ BENITEZ</span>
<span class="t " style="left:390.00px;top:317.00px;font-size:13px;line-height:15px;color:#000;transform:scaleX(1.0970);">Male</span>
<span class="t " style="left:444.00px;top:317.00px;font-size:13px;line-height:15px;color:#000;transform:scaleX(1.0646);">Argentina</span>
<span class="t " style="left:606.00px;top:317.00px;font-size:13px;line-height:15px;color:#000;transform:scaleX(0.9676);">06170</span>
<span class="t " style="left:725.00px;top:317.00px;font-size:13px;line-height:15px;color:#000;transform:scaleX(0.8995);">CD FAS</span>
<div class="b " style="left:0px;top:353px;width:23px;height:1px;background:#c8c8c8;"></div>
<div class="b " style="left:23px;top:353px;width:1101px;height:1px;background:#000;"></div>
<span class="t " style="left:7.18px;top:337.00px;font-size:13px;line-height:15px;color:#262626;transform:scaleX(0.9676);transform-origin:50% 50%;">8</span>
<span class="t " style="left:40.16px;top:337.00px;font-size:13px;line-height:15px;color:#000;transform:scaleX(0.9735);transform-origin:100% 50%;">1234573</span>
<span class="t " style="left:96.00px;top:337.00px;font-size:13px;line-height:15px;color:#000;transform:scaleX(0.8693);">JACK</span>
<span class="t " style="left:170.00px;top:337.00px;font-size:13px;line-height:15px;color:#000;transform:scaleX(0.9464);">VALLEJO MARQUEZ</span>
<span class="t " style="left:390.00px;top:337.00px;font-size:13px;line-height:15px;color:#000;transform:scaleX(1.0970);">Male</span>
<span class="t " style="left:444.00px;top:337.00px;font-size:13px;line-height:15px;color:#000;transform:scaleX(1.0247);">Venezuela</span>
<span class="t " style="left:606.00px;top:337.00px;font-size:13px;line-height:15px;color:#000;transform:scaleX(0.9676);">04930</span>
<span class="t " style="left:725.00px;top:337.00px;font-size:13px;line-height:15px;color:#000;transform:scaleX(0.8987);">NEW ORLEANS JESTERS</span>
<div class="b " style="left:0px;top:373px;width:23px;height:1px;background:#c8c8c8;"></div>
<div class="b " style="left:23px;top:373px;width:1101px;height:1px;background:#000;"></div>
<span class="t " style="left:7.18px;top:357.00px;font-size:13px;line-height:15px;color:#262626;transform:scaleX(0.9676);transform-origin:50% 50%;">9</span>
<span class="t " style="left:40.16px;top:357.00px;font-size:13px;line-height:15px;color:#000;transform:scaleX(0.9735);transform-origin:100% 50%;">1234574</span>
<span class="t " style="left:96.00px;top:357.00px;font-size:13px;line-height:15px;color:#000;transform:scaleX(0.8693);">JACK</span>
<span class="t " style="left:170.00px;top:357.00px;font-size:13px;line-height:15px;color:#000;transform:scaleX(0.9639);">BARBONA</span>
<span class="t " style="left:390.00px;top:357.00px;font-size:13px;line-height:15px;color:#000;transform:scaleX(1.0970);">Male</span>
<span class="t " style="left:444.00px;top:357.00px;font-size:13px;line-height:15px;color:#000;">El Salvador</span>
<span class="t " style="left:606.00px;top:357.00px;font-size:13px;line-height:15px;color:#000;transform:scaleX(0.9751);">A0576</span>
<span class="t " style="left:725.00px;top:357.00px;font-size:13px;line-height:15px;color:#000;transform:scaleX(0.9295);">CLUB TIJUANA XOLOITZCUINTLES DE CALIENTE</span>
<div class="b " style="left:0px;top:393px;width:23px;height:1px;background:#c8c8c8;"></div>
<div class="b " style="left:23px;top:393px;width:1101px;height:1px;background:#000;"></div>
<span class="t " style="left:3.57px;top:377.00px;font-size:13px;line-height:15px;color:#262626;transform:scaleX(0.9676);transform-origin:50% 50%;">10</span>
<span class="t " style="left:40.16px;top:377.00px;font-size:13px;line-height:15px;color:#000;transform:scaleX(0.9735);transform-origin:100% 50%;">1234575</span>
<span class="t " style="left:96.00px;top:377.00px;font-size:13px;line-height:15px;color:#000;transform:scaleX(0.8693);">JACK</span>
<span class="t " style="left:170.00px;top:377.00px;font-size:13px;line-height:15px;color:#000;transform:scaleX(0.9365);">FRANCO POLA</span>
<span class="t " style="left:390.00px;top:377.00px;font-size:13px;line-height:15px;color:#000;transform:scaleX(1.0970);">Male</span>
<span class="t " style="left:444.00px;top:377.00px;font-size:13px;line-height:15px;color:#000;transform:scaleX(0.9380);">USA</span>
<span class="t " style="left:606.00px;top:377.00px;font-size:13px;line-height:15px;color:#000;transform:scaleX(0.9348);">PP458</span>
<span class="t " style="left:725.00px;top:377.00px;font-size:13px;line-height:15px;color:#000;transform:scaleX(0.9385);">PIONEROS DE CANCUN</span>
<div class="b " style="left:0px;top:413px;width:23px;height:1px;background:#c8c8c8;"></div>
<div class="b " style="left:23px;top:413px;width:1101px;height:1px;background:#000;"></div>
<span class="t " style="left:4.05px;top:397.00px;font-size:13px;line-height:15px;color:#262626;transform:scaleX(1.0370);transform-origin:50% 50%;">11</span>
<span class="t " style="left:40.16px;top:397.00px;font-size:13px;line-height:15px;color:#000;transform:scaleX(0.9735);transform-origin:100% 50%;">1234576</span>
<span class="t " style="left:96.00px;top:397.00px;font-size:13px;line-height:15px;color:#000;transform:scaleX(0.8693);">JACK</span>
<span class="t " style="left:170.00px;top:397.00px;font-size:13px;line-height:15px;color:#000;transform:scaleX(0.9711);">NORMAN GONZALEZ</span>
<span class="t " style="left:390.00px;top:397.00px;font-size:13px;line-height:15px;color:#000;transform:scaleX(1.0970);">Male</span>
<span class="t " style="left:444.00px;top:397.00px;font-size:13px;line-height:15px;color:#000;transform:scaleX(1.0054);">France</span>
<span class="t " style="left:606.00px;top:397.00px;font-size:13px;line-height:15px;color:#000;transform:scaleX(0.9535);">DL452</span>
<span class="t " style="left:725.00px;top:397.00px;font-size:13px;line-height:15px;color:#000;transform:scaleX(0.9507);">CLUB UNIVERSIDAD AUTONOMA DE ZACATECAS</span>
<div class="b " style="left:0px;top:433px;width:23px;height:1px;background:#c8c8c8;"></div>
<div class="b " style="left:23px;top:433px;width:1101px;height:1px;background:#000;"></div>
<span class="t " style="left:3.57px;top:417.00px;font-size:13px;line-height:15px;color:#262626;transform:scaleX(0.9676);transform-origin:50% 50%;">12</span>
<span class="t " style="left:40.16px;top:417.00px;font-size:13px;line-height:15px;color:#000;transform:scaleX(0.9735);transform-origin:100% 50%;">1234577</span>
<span class="t " style="left:96.00px;top:417.00px;font-size:13px;line-height:15px;color:#000;transform:scaleX(0.8693);">JACK</span>
<span class="t " style="left:170.00px;top:417.00px;font-size:13px;line-height:15px;color:#000;transform:scaleX(0.9237);">RODRIGUEZ BARRIOS</span>
<span class="t " style="left:390.00px;top:417.00px;font-size:13px;line-height:15px;color:#000;transform:scaleX(1.0970);">Male</span>
<span class="t " style="left:444.00px;top:417.00px;font-size:13px;line-height:15px;color:#000;transform:scaleX(0.9645);">UK</span>
<span class="t " style="left:606.00px;top:417.00px;font-size:13px;line-height:15px;color:#000;transform:scaleX(0.9676);">48806</span>
<span class="t " style="left:725.00px;top:417.00px;font-size:13px;line-height:15px;color:#000;transform:scaleX(0.8995);">CD FAS</span>
<svg class="b" style="left:604px;top:414px" width="6" height="6" viewBox="0 0 6 6"><path d="M0 0H5.5L0 5.5Z" fill="#1e7145"/></svg>
<div class="b " style="left:0px;top:453px;width:23px;height:1px;background:#c8c8c8;"></div>
<div class="b " style="left:23px;top:453px;width:1101px;height:1px;background:#000;"></div>
<span class="t " style="left:3.57px;top:437.00px;font-size:13px;line-height:15px;color:#262626;transform:scaleX(0.9676);transform-origin:50% 50%;">13</span>
<span class="t " style="left:40.16px;top:437.00px;font-size:13px;line-height:15px;color:#000;transform:scaleX(0.9735);transform-origin:100% 50%;">1234578</span>
<span class="t " style="left:96.00px;top:437.00px;font-size:13px;line-height:15px;color:#000;transform:scaleX(0.8693);">JACK</span>
<span class="t " style="left:170.00px;top:437.00px;font-size:13px;line-height:15px;color:#000;transform:scaleX(0.9181);">SANTOS OLIVARES</span>
<span class="t " style="left:390.00px;top:437.00px;font-size:13px;line-height:15px;color:#000;transform:scaleX(1.0970);">Male</span>
<span class="t " style="left:444.00px;top:437.00px;font-size:13px;line-height:15px;color:#000;transform:scaleX(1.0968);">Montenegro</span>
<span class="t " style="left:606.00px;top:437.00px;font-size:13px;line-height:15px;color:#000;transform:scaleX(0.9465);">P036</span>
<span class="t " style="left:725.00px;top:437.00px;font-size:13px;line-height:15px;color:#000;transform:scaleX(0.9366);">SANTA TECLA FUTBOL CLUB</span>
<div class="b " style="left:0px;top:473px;width:23px;height:1px;background:#c8c8c8;"></div>
<div class="b " style="left:23px;top:473px;width:1101px;height:1px;background:#000;"></div>
<span class="t " style="left:3.57px;top:457.00px;font-size:13px;line-height:15px;color:#262626;transform:scaleX(0.9676);transform-origin:50% 50%;">14</span>
<span class="t " style="left:40.16px;top:457.00px;font-size:13px;line-height:15px;color:#000;transform:scaleX(0.9735);transform-origin:100% 50%;">1234579</span>
<span class="t " style="left:96.00px;top:457.00px;font-size:13px;line-height:15px;color:#000;transform:scaleX(0.8693);">JACK</span>
<span class="t " style="left:170.00px;top:457.00px;font-size:13px;line-height:15px;color:#000;transform:scaleX(0.8877);">PEREZ PETIT</span>
<span class="t " style="left:390.00px;top:457.00px;font-size:13px;line-height:15px;color:#000;transform:scaleX(1.0970);">Male</span>
<span class="t " style="left:444.00px;top:457.00px;font-size:13px;line-height:15px;color:#000;transform:scaleX(1.0133);">Serbia</span>
<span class="t " style="left:606.00px;top:457.00px;font-size:13px;line-height:15px;color:#000;transform:scaleX(0.9348);">PP571</span>
<span class="t " style="left:725.00px;top:457.00px;font-size:13px;line-height:15px;color:#000;transform:scaleX(0.9134);">VERDES FOOTBALL CLUB</span>
<div class="b " style="left:0px;top:493px;width:23px;height:1px;background:#c8c8c8;"></div>
<div class="b " style="left:23px;top:493px;width:1101px;height:1px;background:#000;"></div>
<span class="t " style="left:3.57px;top:477.00px;font-size:13px;line-height:15px;color:#262626;transform:scaleX(0.9676);transform-origin:50% 50%;">15</span>
<span class="t " style="left:40.16px;top:477.00px;font-size:13px;line-height:15px;color:#000;transform:scaleX(0.9735);transform-origin:100% 50%;">1234580</span>
<span class="t " style="left:96.00px;top:477.00px;font-size:13px;line-height:15px;color:#000;transform:scaleX(0.8693);">JACK</span>
<span class="t " style="left:170.00px;top:477.00px;font-size:13px;line-height:15px;color:#000;transform:scaleX(0.9339);">CARABALLO DELGADO</span>
<span class="t " style="left:390.00px;top:477.00px;font-size:13px;line-height:15px;color:#000;transform:scaleX(1.0970);">Male</span>
<span class="t " style="left:444.00px;top:477.00px;font-size:13px;line-height:15px;color:#000;transform:scaleX(1.0562);">Australia</span>
<span class="t " style="left:606.00px;top:477.00px;font-size:13px;line-height:15px;color:#000;transform:scaleX(0.9506);">P0268</span>
<span class="t " style="left:725.00px;top:477.00px;font-size:13px;line-height:15px;color:#000;transform:scaleX(0.9124);">FLORIDA RUSH SOCCER CLUB</span>
<div class="b " style="left:0px;top:513px;width:23px;height:1px;background:#c8c8c8;"></div>
<div class="b " style="left:23px;top:513px;width:1101px;height:1px;background:#000;"></div>
<span class="t " style="left:3.57px;top:497.00px;font-size:13px;line-height:15px;color:#262626;transform:scaleX(0.9676);transform-origin:50% 50%;">16</span>
<span class="t " style="left:40.16px;top:497.00px;font-size:13px;line-height:15px;color:#000;transform:scaleX(0.9735);transform-origin:100% 50%;">1234581</span>
<span class="t " style="left:96.00px;top:497.00px;font-size:13px;line-height:15px;color:#000;transform:scaleX(0.8693);">JACK</span>
<span class="t " style="left:170.00px;top:497.00px;font-size:13px;line-height:15px;color:#000;transform:scaleX(0.9268);">VALLADARES GARCIA</span>
<span class="t " style="left:390.00px;top:497.00px;font-size:13px;line-height:15px;color:#000;transform:scaleX(1.0970);">Male</span>
<span class="t " style="left:444.00px;top:497.00px;font-size:13px;line-height:15px;color:#000;transform:scaleX(1.0376);">Croatia</span>
<span class="t " style="left:606.00px;top:497.00px;font-size:13px;line-height:15px;color:#000;transform:scaleX(0.9536);">PA061</span>
<span class="t " style="left:725.00px;top:497.00px;font-size:13px;line-height:15px;color:#000;transform:scaleX(0.9251);">WATERHOUSE FC</span>
<div class="b " style="left:0px;top:533px;width:23px;height:1px;background:#c8c8c8;"></div>
<div class="b " style="left:23px;top:533px;width:1101px;height:1px;background:#000;"></div>
<span class="t " style="left:3.57px;top:517.00px;font-size:13px;line-height:15px;color:#262626;transform:scaleX(0.9676);transform-origin:50% 50%;">17</span>
<span class="t " style="left:40.16px;top:517.00px;font-size:13px;line-height:15px;color:#000;transform:scaleX(0.9735);transform-origin:100% 50%;">1234582</span>
<span class="t " style="left:96.00px;top:517.00px;font-size:13px;line-height:15px;color:#000;transform:scaleX(0.8693);">JACK</span>
<span class="t " style="left:170.00px;top:517.00px;font-size:13px;line-height:15px;color:#000;transform:scaleX(0.9452);">VILLALTA HERNANDEZ</span>
<span class="t " style="left:390.00px;top:517.00px;font-size:13px;line-height:15px;color:#000;transform:scaleX(1.0970);">Male</span>
<span class="t " style="left:444.00px;top:517.00px;font-size:13px;line-height:15px;color:#000;transform:scaleX(1.0526);">Albania</span>
<span class="t " style="left:606.00px;top:517.00px;font-size:13px;line-height:15px;color:#000;transform:scaleX(0.9235);">YC311</span>
<span class="t " style="left:725.00px;top:517.00px;font-size:13px;line-height:15px;color:#000;transform:scaleX(0.9546);">ALIANZA FUTBOL CLUB</span>
<div class="b " style="left:0px;top:553px;width:23px;height:1px;background:#c8c8c8;"></div>
<div class="b " style="left:23px;top:553px;width:1101px;height:1px;background:#000;"></div>
<span class="t " style="left:3.57px;top:537.00px;font-size:13px;line-height:15px;color:#262626;transform:scaleX(0.9676);transform-origin:50% 50%;">18</span>
<span class="t " style="left:40.16px;top:537.00px;font-size:13px;line-height:15px;color:#000;transform:scaleX(0.9735);transform-origin:100% 50%;">1234583</span>
<span class="t " style="left:96.00px;top:537.00px;font-size:13px;line-height:15px;color:#000;transform:scaleX(0.8693);">JACK</span>
<span class="t " style="left:170.00px;top:537.00px;font-size:13px;line-height:15px;color:#000;transform:scaleX(0.9681);">NOVOA ALFARO</span>
<span class="t " style="left:390.00px;top:537.00px;font-size:13px;line-height:15px;color:#000;transform:scaleX(1.0970);">Male</span>
<span class="t " style="left:444.00px;top:537.00px;font-size:13px;line-height:15px;color:#000;transform:scaleX(1.0424);">Germany</span>
<span class="t " style="left:606.00px;top:537.00px;font-size:13px;line-height:15px;color:#000;transform:scaleX(0.9536);">PA045</span>
<span class="t " style="left:725.00px;top:537.00px;font-size:13px;line-height:15px;color:#000;transform:scaleX(0.9391);">CLUB DEPORTIVO ATLETICO MARTE</span>
<div class="b " style="left:0px;top:573px;width:23px;height:1px;background:#c8c8c8;"></div>
<div class="b " style="left:23px;top:573px;width:1101px;height:1px;background:#000;"></div>
<span class="t " style="left:3.57px;top:557.00px;font-size:13px;line-height:15px;color:#262626;transform:scaleX(0.9676);transform-origin:50% 50%;">19</span>
<span class="t " style="left:40.16px;top:557.00px;font-size:13px;line-height:15px;color:#000;transform:scaleX(0.9735);transform-origin:100% 50%;">1234584</span>
<span class="t " style="left:96.00px;top:557.00px;font-size:13px;line-height:15px;color:#000;transform:scaleX(0.8693);">JACK</span>
<span class="t " style="left:170.00px;top:557.00px;font-size:13px;line-height:15px;color:#000;transform:scaleX(0.9159);">CORNEJO RIVAS</span>
<span class="t " style="left:390.00px;top:557.00px;font-size:13px;line-height:15px;color:#000;transform:scaleX(1.0970);">Male</span>
<span class="t " style="left:444.00px;top:557.00px;font-size:13px;line-height:15px;color:#000;transform:scaleX(1.0924);">Italy</span>
<span class="t " style="left:606.00px;top:557.00px;font-size:13px;line-height:15px;color:#000;transform:scaleX(0.9558);">HP65</span>
<span class="t " style="left:725.00px;top:557.00px;font-size:13px;line-height:15px;color:#000;transform:scaleX(0.9366);">SANTA TECLA FUTBOL CLUB</span>
<div class="b " style="left:0px;top:593px;width:23px;height:1px;background:#c8c8c8;"></div>
<div class="b " style="left:23px;top:593px;width:1101px;height:1px;background:#000;"></div>
<span class="t " style="left:3.57px;top:577.00px;font-size:13px;line-height:15px;color:#262626;transform:scaleX(0.9676);transform-origin:50% 50%;">20</span>
<span class="t " style="left:40.16px;top:577.00px;font-size:13px;line-height:15px;color:#000;transform:scaleX(0.9735);transform-origin:100% 50%;">1234585</span>
<span class="t " style="left:96.00px;top:577.00px;font-size:13px;line-height:15px;color:#000;transform:scaleX(0.8693);">JACK</span>
<span class="t " style="left:170.00px;top:577.00px;font-size:13px;line-height:15px;color:#000;transform:scaleX(0.9289);">CRESPIN AGUILAR</span>
<span class="t " style="left:390.00px;top:577.00px;font-size:13px;line-height:15px;color:#000;transform:scaleX(1.0970);">Male</span>
<span class="t " style="left:444.00px;top:577.00px;font-size:13px;line-height:15px;color:#000;transform:scaleX(1.0509);">Colombia</span>
<span class="t " style="left:606.00px;top:577.00px;font-size:13px;line-height:15px;color:#000;transform:scaleX(0.9393);">C0188</span>
<span class="t " style="left:725.00px;top:577.00px;font-size:13px;line-height:15px;color:#000;transform:scaleX(0.9391);">CLUB DEPORTIVO ATLETICO MARTE</span>
<div class="b " style="left:0px;top:613px;width:23px;height:1px;background:#c8c8c8;"></div>
<div class="b " style="left:23px;top:613px;width:1101px;height:1px;background:#000;"></div>
<span class="t " style="left:3.57px;top:597.00px;font-size:13px;line-height:15px;color:#262626;transform:scaleX(0.9676);transform-origin:50% 50%;">21</span>
<span class="t " style="left:40.16px;top:597.00px;font-size:13px;line-height:15px;color:#000;transform:scaleX(0.9735);transform-origin:100% 50%;">1234586</span>
<span class="t " style="left:96.00px;top:597.00px;font-size:13px;line-height:15px;color:#000;transform:scaleX(0.8693);">JACK</span>
<span class="t " style="left:170.00px;top:597.00px;font-size:13px;line-height:15px;color:#000;transform:scaleX(0.9179);">CHEVEZ GARCIA</span>
<span class="t " style="left:390.00px;top:597.00px;font-size:13px;line-height:15px;color:#000;transform:scaleX(1.0970);">Male</span>
<span class="t " style="left:444.00px;top:597.00px;font-size:13px;line-height:15px;color:#000;transform:scaleX(1.0646);">Argentina</span>
<span class="t " style="left:606.00px;top:597.00px;font-size:13px;line-height:15px;color:#000;transform:scaleX(0.9676);">30506</span>
<span class="t " style="left:725.00px;top:597.00px;font-size:13px;line-height:15px;color:#000;transform:scaleX(0.9134);">VERDES FOOTBALL CLUB</span>
<svg class="b" style="left:604px;top:594px" width="6" height="6" viewBox="0 0 6 6"><path d="M0 0H5.5L0 5.5Z" fill="#1e7145"/></svg>
<div class="b " style="left:0px;top:633px;width:23px;height:1px;background:#c8c8c8;"></div>
<div class="b " style="left:23px;top:633px;width:1101px;height:1px;background:#000;"></div>
<span class="t " style="left:3.57px;top:617.00px;font-size:13px;line-height:15px;color:#262626;transform:scaleX(0.9676);transform-origin:50% 50%;">22</span>
<span class="t " style="left:40.16px;top:617.00px;font-size:13px;line-height:15px;color:#000;transform:scaleX(0.9735);transform-origin:100% 50%;">1234587</span>
<span class="t " style="left:96.00px;top:617.00px;font-size:13px;line-height:15px;color:#000;transform:scaleX(0.8693);">JACK</span>
<span class="t " style="left:170.00px;top:617.00px;font-size:13px;line-height:15px;color:#000;transform:scaleX(0.9690);">GUEVARA SOMOZA</span>
<span class="t " style="left:390.00px;top:617.00px;font-size:13px;line-height:15px;color:#000;transform:scaleX(1.0970);">Male</span>
<span class="t " style="left:444.00px;top:617.00px;font-size:13px;line-height:15px;color:#000;transform:scaleX(1.0247);">Venezuela</span>
<span class="t " style="left:606.00px;top:617.00px;font-size:13px;line-height:15px;color:#000;transform:scaleX(0.9676);">33127</span>
<span class="t " style="left:725.00px;top:617.00px;font-size:13px;line-height:15px;color:#000;transform:scaleX(0.9391);">CLUB DEPORTIVO ATLETICO MARTE</span>
<svg class="b" style="left:604px;top:614px" width="6" height="6" viewBox="0 0 6 6"><path d="M0 0H5.5L0 5.5Z" fill="#1e7145"/></svg>
<div class="b " style="left:0px;top:653px;width:23px;height:1px;background:#c8c8c8;"></div>
<div class="b " style="left:23px;top:653px;width:1101px;height:1px;background:#000;"></div>
<span class="t " style="left:3.57px;top:637.00px;font-size:13px;line-height:15px;color:#262626;transform:scaleX(0.9676);transform-origin:50% 50%;">23</span>
<span class="t " style="left:40.16px;top:637.00px;font-size:13px;line-height:15px;color:#000;transform:scaleX(0.9735);transform-origin:100% 50%;">1234588</span>
<span class="t " style="left:96.00px;top:637.00px;font-size:13px;line-height:15px;color:#000;transform:scaleX(0.8693);">JACK</span>
<span class="t " style="left:170.00px;top:637.00px;font-size:13px;line-height:15px;color:#000;transform:scaleX(0.9529);">HERNANDEZ ZAVALA</span>
<span class="t " style="left:390.00px;top:637.00px;font-size:13px;line-height:15px;color:#000;transform:scaleX(1.0970);">Male</span>
<span class="t " style="left:444.00px;top:637.00px;font-size:13px;line-height:15px;color:#000;">El Salvador</span>
<span class="t " style="left:606.00px;top:637.00px;font-size:13px;line-height:15px;color:#000;transform:scaleX(0.9761);">0101-19</span>
<span class="t " style="left:725.00px;top:637.00px;font-size:13px;line-height:15px;color:#000;transform:scaleX(0.9251);">WATERHOUSE FC</span>
<div class="b " style="left:0px;top:673px;width:23px;height:1px;background:#c8c8c8;"></div>
<div class="b " style="left:23px;top:673px;width:1101px;height:1px;background:#000;"></div>
<span class="t " style="left:3.57px;top:657.00px;font-size:13px;line-height:15px;color:#262626;transform:scaleX(0.9676);transform-origin:50% 50%;">24</span>
<span class="t " style="left:40.16px;top:657.00px;font-size:13px;line-height:15px;color:#000;transform:scaleX(0.9735);transform-origin:100% 50%;">1234589</span>
<span class="t " style="left:96.00px;top:657.00px;font-size:13px;line-height:15px;color:#000;transform:scaleX(0.8693);">JACK</span>
<span class="t " style="left:170.00px;top:657.00px;font-size:13px;line-height:15px;color:#000;transform:scaleX(0.9238);">SANCHEZ GARCIA</span>
<span class="t " style="left:390.00px;top:657.00px;font-size:13px;line-height:15px;color:#000;transform:scaleX(1.0970);">Male</span>
<span class="t " style="left:444.00px;top:657.00px;font-size:13px;line-height:15px;color:#000;transform:scaleX(0.9380);">USA</span>
<span class="t " style="left:606.00px;top:657.00px;font-size:13px;line-height:15px;color:#000;transform:scaleX(0.9761);">1807-20</span>
<span class="t " style="left:725.00px;top:657.00px;font-size:13px;line-height:15px;color:#000;transform:scaleX(0.9366);">SANTA TECLA FUTBOL CLUB</span>
<div class="b " style="left:0px;top:693px;width:23px;height:1px;background:#c8c8c8;"></div>
<div class="b " style="left:23px;top:693px;width:1101px;height:1px;background:#000;"></div>
<span class="t " style="left:3.57px;top:677.00px;font-size:13px;line-height:15px;color:#262626;transform:scaleX(0.9676);transform-origin:50% 50%;">25</span>
<span class="t " style="left:40.16px;top:677.00px;font-size:13px;line-height:15px;color:#000;transform:scaleX(0.9735);transform-origin:100% 50%;">1234590</span>
<span class="t " style="left:96.00px;top:677.00px;font-size:13px;line-height:15px;color:#000;transform:scaleX(0.8693);">JACK</span>
<span class="t " style="left:170.00px;top:677.00px;font-size:13px;line-height:15px;color:#000;transform:scaleX(0.9185);">CAICEDO BARRERA</span>
<span class="t " style="left:390.00px;top:677.00px;font-size:13px;line-height:15px;color:#000;transform:scaleX(1.0970);">Male</span>
<span class="t " style="left:444.00px;top:677.00px;font-size:13px;line-height:15px;color:#000;transform:scaleX(1.0054);">France</span>
<span class="t " style="left:606.00px;top:677.00px;font-size:13px;line-height:15px;color:#000;transform:scaleX(0.9468);">R02994</span>
<span class="t " style="left:725.00px;top:677.00px;font-size:13px;line-height:15px;color:#000;transform:scaleX(0.9595);">UNIVERSIDAD NACIONAL</span>
<div class="b " style="left:0px;top:713px;width:23px;height:1px;background:#c8c8c8;"></div>
<div class="b " style="left:23px;top:713px;width:1101px;height:1px;background:#000;"></div>
<span class="t " style="left:3.57px;top:697.00px;font-size:13px;line-height:15px;color:#262626;transform:scaleX(0.9676);transform-origin:50% 50%;">26</span>
<span class="t " style="left:40.16px;top:697.00px;font-size:13px;line-height:15px;color:#000;transform:scaleX(0.9735);transform-origin:100% 50%;">1234591</span>
<span class="t " style="left:96.00px;top:697.00px;font-size:13px;line-height:15px;color:#000;transform:scaleX(0.8693);">JACK</span>
<span class="t " style="left:170.00px;top:697.00px;font-size:13px;line-height:15px;color:#000;transform:scaleX(0.9419);">LOPEZ MARTINEZ</span>
<span class="t " style="left:390.00px;top:697.00px;font-size:13px;line-height:15px;color:#000;transform:scaleX(1.0970);">Male</span>
<span class="t " style="left:444.00px;top:697.00px;font-size:13px;line-height:15px;color:#000;transform:scaleX(0.9645);">UK</span>
<span class="t " style="left:606.00px;top:697.00px;font-size:13px;line-height:15px;color:#000;transform:scaleX(0.9429);">R0264</span>
<span class="t " style="left:725.00px;top:697.00px;font-size:13px;line-height:15px;color:#000;transform:scaleX(0.9391);">CLUB DEPORTIVO ATLETICO MARTE</span>
<div class="b " style="left:0px;top:733px;width:23px;height:1px;background:#c8c8c8;"></div>
<div class="b " style="left:23px;top:733px;width:1101px;height:1px;background:#000;"></div>
<span class="t " style="left:3.57px;top:717.00px;font-size:13px;line-height:15px;color:#262626;transform:scaleX(0.9676);transform-origin:50% 50%;">27</span>
<span class="t " style="left:40.16px;top:717.00px;font-size:13px;line-height:15px;color:#000;transform:scaleX(0.9735);transform-origin:100% 50%;">1234592</span>
<span class="t " style="left:96.00px;top:717.00px;font-size:13px;line-height:15px;color:#000;transform:scaleX(0.8693);">JACK</span>
<span class="t " style="left:170.00px;top:717.00px;font-size:13px;line-height:15px;color:#000;transform:scaleX(0.9490);">AGUILAR MORALES</span>
<span class="t " style="left:390.00px;top:717.00px;font-size:13px;line-height:15px;color:#000;transform:scaleX(1.0970);">Male</span>
<span class="t " style="left:444.00px;top:717.00px;font-size:13px;line-height:15px;color:#000;transform:scaleX(1.0968);">Montenegro</span>
<span class="t " style="left:606.00px;top:717.00px;font-size:13px;line-height:15px;color:#000;transform:scaleX(0.9429);">R0257</span>
<span class="t " style="left:725.00px;top:717.00px;font-size:13px;line-height:15px;color:#000;transform:scaleX(0.9539);">ASOCIACION DEPORTIVA ISIDRO METAPAN</span>
<div class="b " style="left:0px;top:753px;width:23px;height:1px;background:#c8c8c8;"></div>
<div class="b " style="left:23px;top:753px;width:1101px;height:1px;background:#000;"></div>
<span class="t " style="left:3.57px;top:737.00px;font-size:13px;line-height:15px;color:#262626;transform:scaleX(0.9676);transform-origin:50% 50%;">28</span>
<span class="t " style="left:40.16px;top:737.00px;font-size:13px;line-height:15px;color:#000;transform:scaleX(0.9735);transform-origin:100% 50%;">1234593</span>
<span class="t " style="left:96.00px;top:737.00px;font-size:13px;line-height:15px;color:#000;transform:scaleX(0.8693);">JACK</span>
<span class="t " style="left:170.00px;top:737.00px;font-size:13px;line-height:15px;color:#000;transform:scaleX(0.9618);">GUARDADO GIRON</span>
<span class="t " style="left:390.00px;top:737.00px;font-size:13px;line-height:15px;color:#000;transform:scaleX(1.0970);">Male</span>
<span class="t " style="left:444.00px;top:737.00px;font-size:13px;line-height:15px;color:#000;transform:scaleX(1.0133);">Serbia</span>
<span class="t " style="left:606.00px;top:737.00px;font-size:13px;line-height:15px;color:#000;transform:scaleX(0.9450);">RO296</span>
<span class="t " style="left:725.00px;top:737.00px;font-size:13px;line-height:15px;color:#000;transform:scaleX(0.9359);">ONCE DEPORTIVO FUTBOL CLUB</span>
<div class="b " style="left:0px;top:773px;width:23px;height:1px;background:#c8c8c8;"></div>
<div class="b " style="left:23px;top:773px;width:1101px;height:1px;background:#000;"></div>
<span class="t " style="left:3.57px;top:757.00px;font-size:13px;line-height:15px;color:#262626;transform:scaleX(0.9676);transform-origin:50% 50%;">29</span>
<span class="t " style="left:40.16px;top:757.00px;font-size:13px;line-height:15px;color:#000;transform:scaleX(0.9735);transform-origin:100% 50%;">1234594</span>
<span class="t " style="left:96.00px;top:757.00px;font-size:13px;line-height:15px;color:#000;transform:scaleX(0.9093);">JANE</span>
<span class="t " style="left:170.00px;top:757.00px;font-size:13px;line-height:15px;color:#000;transform:scaleX(0.9237);">AVELAR TROYA</span>
<span class="t " style="left:390.00px;top:757.00px;font-size:13px;line-height:15px;color:#000;transform:scaleX(1.0198);">Female</span>
<span class="t " style="left:444.00px;top:757.00px;font-size:13px;line-height:15px;color:#000;transform:scaleX(1.0562);">Australia</span>
<span class="t " style="left:606.00px;top:757.00px;font-size:13px;line-height:15px;color:#000;transform:scaleX(0.9429);">R0279</span>
<span class="t " style="left:725.00px;top:757.00px;font-size:13px;line-height:15px;color:#000;transform:scaleX(0.9546);">ALIANZA FUTBOL CLUB</span>
<div class="b " style="left:0px;top:793px;width:23px;height:1px;background:#c8c8c8;"></div>
<div class="b " style="left:23px;top:793px;width:1101px;height:1px;background:#000;"></div>
<span class="t " style="left:3.57px;top:777.00px;font-size:13px;line-height:15px;color:#262626;transform:scaleX(0.9676);transform-origin:50% 50%;">30</span>
<span class="t " style="left:40.16px;top:777.00px;font-size:13px;line-height:15px;color:#000;transform:scaleX(0.9735);transform-origin:100% 50%;">1234595</span>
<span class="t " style="left:96.00px;top:777.00px;font-size:13px;line-height:15px;color:#000;transform:scaleX(0.9093);">JANE</span>
<span class="t " style="left:170.00px;top:777.00px;font-size:13px;line-height:15px;color:#000;transform:scaleX(0.9829);">MENDOZA RINCAN</span>
<span class="t " style="left:390.00px;top:777.00px;font-size:13px;line-height:15px;color:#000;transform:scaleX(1.0198);">Female</span>
<span class="t " style="left:444.00px;top:777.00px;font-size:13px;line-height:15px;color:#000;transform:scaleX(1.0376);">Croatia</span>
<span class="t " style="left:606.00px;top:777.00px;font-size:13px;line-height:15px;color:#000;transform:scaleX(0.9429);">R0280</span>
<span class="t " style="left:725.00px;top:777.00px;font-size:13px;line-height:15px;color:#000;transform:scaleX(0.9251);">WATERHOUSE FC</span>
<div class="b " style="left:0px;top:813px;width:23px;height:1px;background:#c8c8c8;"></div>
<div class="b " style="left:23px;top:813px;width:1101px;height:1px;background:#000;"></div>
<span class="t " style="left:3.57px;top:797.00px;font-size:13px;line-height:15px;color:#262626;transform:scaleX(0.9676);transform-origin:50% 50%;">31</span>
<span class="t " style="left:40.16px;top:797.00px;font-size:13px;line-height:15px;color:#000;transform:scaleX(0.9735);transform-origin:100% 50%;">1234596</span>
<span class="t " style="left:96.00px;top:797.00px;font-size:13px;line-height:15px;color:#000;transform:scaleX(0.9093);">JANE</span>
<span class="t " style="left:170.00px;top:797.00px;font-size:13px;line-height:15px;color:#000;transform:scaleX(0.9139);">AGUIRRE HERRERA</span>
<span class="t " style="left:390.00px;top:797.00px;font-size:13px;line-height:15px;color:#000;transform:scaleX(1.0198);">Female</span>
<span class="t " style="left:444.00px;top:797.00px;font-size:13px;line-height:15px;color:#000;transform:scaleX(1.0526);">Albania</span>
<span class="t " style="left:606.00px;top:797.00px;font-size:13px;line-height:15px;color:#000;transform:scaleX(0.9429);">R0277</span>
<span class="t " style="left:725.00px;top:797.00px;font-size:13px;line-height:15px;color:#000;transform:scaleX(0.9359);">ONCE DEPORTIVO FUTBOL CLUB</span>
<div class="b " style="left:0px;top:833px;width:23px;height:1px;background:#c8c8c8;"></div>
<div class="b " style="left:23px;top:833px;width:1101px;height:1px;background:#000;"></div>
<span class="t " style="left:3.57px;top:817.00px;font-size:13px;line-height:15px;color:#262626;transform:scaleX(0.9676);transform-origin:50% 50%;">32</span>
<span class="t " style="left:40.16px;top:817.00px;font-size:13px;line-height:15px;color:#000;transform:scaleX(0.9735);transform-origin:100% 50%;">1234597</span>
<span class="t " style="left:96.00px;top:817.00px;font-size:13px;line-height:15px;color:#000;transform:scaleX(0.9093);">JANE</span>
<span class="t " style="left:170.00px;top:817.00px;font-size:13px;line-height:15px;color:#000;transform:scaleX(0.9565);">VASQUEZ ALVARADO</span>
<span class="t " style="left:390.00px;top:817.00px;font-size:13px;line-height:15px;color:#000;transform:scaleX(1.0198);">Female</span>
<span class="t " style="left:444.00px;top:817.00px;font-size:13px;line-height:15px;color:#000;transform:scaleX(1.0424);">Germany</span>
<span class="t " style="left:606.00px;top:817.00px;font-size:13px;line-height:15px;color:#000;transform:scaleX(0.9174);">12CR5</span>
<span class="t " style="left:725.00px;top:817.00px;font-size:13px;line-height:15px;color:#000;transform:scaleX(0.9330);">CD LUIS ANGEL FIRPO</span>
<div class="b " style="left:0px;top:853px;width:23px;height:1px;background:#c8c8c8;"></div>
<div class="b " style="left:23px;top:853px;width:1101px;height:1px;background:#000;"></div>
<span class="t " style="left:3.57px;top:837.00px;font-size:13px;line-height:15px;color:#262626;transform:scaleX(0.9676);transform-origin:50% 50%;">33</span>
<span class="t " style="left:40.16px;top:837.00px;font-size:13px;line-height:15px;color:#000;transform:scaleX(0.9735);transform-origin:100% 50%;">1234598</span>
<span class="t " style="left:96.00px;top:837.00px;font-size:13px;line-height:15px;color:#000;transform:scaleX(0.9093);">JANE</span>
<span class="t " style="left:170.00px;top:837.00px;font-size:13px;line-height:15px;color:#000;transform:scaleX(0.9381);">ESCALANTE MARTINEZ</span>
<span class="t " style="left:390.00px;top:837.00px;font-size:13px;line-height:15px;color:#000;transform:scaleX(1.0198);">Female</span>
<span class="t " style="left:444.00px;top:837.00px;font-size:13px;line-height:15px;color:#000;transform:scaleX(1.0924);">Italy</span>
<span class="t " style="left:606.00px;top:837.00px;font-size:13px;line-height:15px;color:#000;transform:scaleX(0.9537);">17DF66</span>
<span class="t " style="left:725.00px;top:837.00px;font-size:13px;line-height:15px;color:#000;transform:scaleX(0.9330);">CD LUIS ANGEL FIRPO</span>
<div class="b " style="left:0px;top:873px;width:23px;height:1px;background:#c8c8c8;"></div>
<div class="b " style="left:23px;top:873px;width:1101px;height:1px;background:#000;"></div>
<span class="t " style="left:3.57px;top:857.00px;font-size:13px;line-height:15px;color:#262626;transform:scaleX(0.9676);transform-origin:50% 50%;">34</span>
<span class="t " style="left:40.16px;top:857.00px;font-size:13px;line-height:15px;color:#000;transform:scaleX(0.9735);transform-origin:100% 50%;">1234599</span>
<span class="t " style="left:96.00px;top:857.00px;font-size:13px;line-height:15px;color:#000;transform:scaleX(0.9093);">JANE</span>
<span class="t " style="left:170.00px;top:857.00px;font-size:13px;line-height:15px;color:#000;">GOMEZ LIMA</span>
<span class="t " style="left:390.00px;top:857.00px;font-size:13px;line-height:15px;color:#000;transform:scaleX(1.0198);">Female</span>
<span class="t " style="left:444.00px;top:857.00px;font-size:13px;line-height:15px;color:#000;transform:scaleX(1.0509);">Colombia</span>
<span class="t " style="left:606.00px;top:857.00px;font-size:13px;line-height:15px;color:#000;transform:scaleX(0.9580);">HP652</span>
<span class="t " style="left:725.00px;top:857.00px;font-size:13px;line-height:15px;color:#000;transform:scaleX(0.9134);">VERDES FOOTBALL CLUB</span>
<div class="b " style="left:0px;top:893px;width:23px;height:1px;background:#c8c8c8;"></div>
<div class="b " style="left:23px;top:893px;width:1101px;height:1px;background:#000;"></div>
<span class="t " style="left:3.57px;top:877.00px;font-size:13px;line-height:15px;color:#262626;transform:scaleX(0.9676);transform-origin:50% 50%;">35</span>
<span class="t " style="left:40.16px;top:877.00px;font-size:13px;line-height:15px;color:#000;transform:scaleX(0.9735);transform-origin:100% 50%;">1234600</span>
<span class="t " style="left:96.00px;top:877.00px;font-size:13px;line-height:15px;color:#000;transform:scaleX(0.9093);">JANE</span>
<span class="t " style="left:170.00px;top:877.00px;font-size:13px;line-height:15px;color:#000;transform:scaleX(0.9143);">DRIOTIS YANES</span>
<span class="t " style="left:390.00px;top:877.00px;font-size:13px;line-height:15px;color:#000;transform:scaleX(1.0198);">Female</span>
<span class="t " style="left:444.00px;top:877.00px;font-size:13px;line-height:15px;color:#000;transform:scaleX(1.0646);">Argentina</span>
<span class="t " style="left:606.00px;top:877.00px;font-size:13px;line-height:15px;color:#000;transform:scaleX(0.9668);">NP4646</span>
<span class="t " style="left:725.00px;top:877.00px;font-size:13px;line-height:15px;color:#000;transform:scaleX(0.9359);">ONCE DEPORTIVO FUTBOL CLUB</span>
<div class="b " style="left:0px;top:913px;width:23px;height:1px;background:#c8c8c8;"></div>
<div class="b " style="left:23px;top:913px;width:1101px;height:1px;background:#000;"></div>
<span class="t " style="left:3.57px;top:897.00px;font-size:13px;line-height:15px;color:#262626;transform:scaleX(0.9676);transform-origin:50% 50%;">36</span>
<span class="t " style="left:40.16px;top:897.00px;font-size:13px;line-height:15px;color:#000;transform:scaleX(0.9735);transform-origin:100% 50%;">1234601</span>
<span class="t " style="left:96.00px;top:897.00px;font-size:13px;line-height:15px;color:#000;transform:scaleX(0.9093);">JANE</span>
<span class="t " style="left:170.00px;top:897.00px;font-size:13px;line-height:15px;color:#000;transform:scaleX(0.9506);">RAMIREZ IBAÑEZ</span>
<span class="t " style="left:390.00px;top:897.00px;font-size:13px;line-height:15px;color:#000;transform:scaleX(1.0198);">Female</span>
<span class="t " style="left:444.00px;top:897.00px;font-size:13px;line-height:15px;color:#000;transform:scaleX(1.0247);">Venezuela</span>
<span class="t " style="left:606.00px;top:897.00px;font-size:13px;line-height:15px;color:#000;transform:scaleX(0.9676);">120916</span>
<span class="t " style="left:725.00px;top:897.00px;font-size:13px;line-height:15px;color:#000;transform:scaleX(0.9546);">ALIANZA FUTBOL CLUB</span>
<svg class="b" style="left:604px;top:894px" width="6" height="6" viewBox="0 0 6 6"><path d="M0 0H5.5L0 5.5Z" fill="#1e7145"/></svg>
<div class="b " style="left:0px;top:933px;width:23px;height:1px;background:#c8c8c8;"></div>
<div class="b " style="left:23px;top:933px;width:1101px;height:1px;background:#000;"></div>
<span class="t " style="left:3.57px;top:917.00px;font-size:13px;line-height:15px;color:#262626;transform:scaleX(0.9676);transform-origin:50% 50%;">37</span>
<span class="t " style="left:40.16px;top:917.00px;font-size:13px;line-height:15px;color:#000;transform:scaleX(0.9735);transform-origin:100% 50%;">1234602</span>
<span class="t " style="left:96.00px;top:917.00px;font-size:13px;line-height:15px;color:#000;transform:scaleX(0.9093);">JANE</span>
<span class="t " style="left:170.00px;top:917.00px;font-size:13px;line-height:15px;color:#000;transform:scaleX(0.9394);">JACOBO NUÑEZ</span>
<span class="t " style="left:390.00px;top:917.00px;font-size:13px;line-height:15px;color:#000;transform:scaleX(1.0198);">Female</span>
<span class="t " style="left:444.00px;top:917.00px;font-size:13px;line-height:15px;color:#000;">El Salvador</span>
<span class="t " style="left:606.00px;top:917.00px;font-size:13px;line-height:15px;color:#000;transform:scaleX(0.9676);">055467</span>
<span class="t " style="left:725.00px;top:917.00px;font-size:13px;line-height:15px;color:#000;transform:scaleX(0.9134);">VERDES FOOTBALL CLUB</span>
<div class="b " style="left:0px;top:953px;width:23px;height:1px;background:#c8c8c8;"></div>
<div class="b " style="left:23px;top:953px;width:1101px;height:1px;background:#000;"></div>
<span class="t " style="left:3.57px;top:937.00px;font-size:13px;line-height:15px;color:#262626;transform:scaleX(0.9676);transform-origin:50% 50%;">38</span>
<span class="t " style="left:40.16px;top:937.00px;font-size:13px;line-height:15px;color:#000;transform:scaleX(0.9735);transform-origin:100% 50%;">1234603</span>
<span class="t " style="left:96.00px;top:937.00px;font-size:13px;line-height:15px;color:#000;transform:scaleX(0.9093);">JANE</span>
<span class="t " style="left:170.00px;top:937.00px;font-size:13px;line-height:15px;color:#000;transform:scaleX(0.9886);">MORAN GIRON</span>
<span class="t " style="left:390.00px;top:937.00px;font-size:13px;line-height:15px;color:#000;transform:scaleX(1.0198);">Female</span>
<span class="t " style="left:444.00px;top:937.00px;font-size:13px;line-height:15px;color:#000;transform:scaleX(0.9380);">USA</span>
<span class="t " style="left:606.00px;top:937.00px;font-size:13px;line-height:15px;color:#000;transform:scaleX(0.9676);">048392</span>
<span class="t " style="left:725.00px;top:937.00px;font-size:13px;line-height:15px;color:#000;transform:scaleX(0.9251);">WATERHOUSE FC</span>
<span class="t " style="left:3.57px;top:957.00px;font-size:13px;line-height:15px;color:#262626;transform:scaleX(0.9676);transform-origin:50% 50%;">39</span>
<span class="t " style="left:40.16px;top:957.00px;font-size:13px;line-height:15px;color:#000;transform:scaleX(0.9735);transform-origin:100% 50%;">1234604</span>
<span class="t " style="left:96.00px;top:957.00px;font-size:13px;line-height:15px;color:#000;transform:scaleX(0.8693);">JACK</span>
<span class="t " style="left:170.00px;top:957.00px;font-size:13px;line-height:15px;color:#000;transform:scaleX(0.8979);">ZARCEÑO FLORES</span>
<span class="t " style="left:390.00px;top:957.00px;font-size:13px;line-height:15px;color:#000;transform:scaleX(1.0970);">Male</span>
<span class="t " style="left:444.00px;top:957.00px;font-size:13px;line-height:15px;color:#000;transform:scaleX(1.0054);">France</span>
<span class="t " style="left:606.00px;top:957.00px;font-size:13px;line-height:15px;color:#000;transform:scaleX(0.9676);">0597</span>
<span class="t " style="left:725.00px;top:957.00px;font-size:13px;line-height:15px;color:#000;transform:scaleX(0.9359);">ONCE DEPORTIVO FUTBOL CLUB</span>
<div class="b " style="left:0px;top:213px;width:1917px;height:1px;background:#9e9e9e;"></div>
<div class="b " style="left:93px;top:194px;width:1px;height:774px;background:#000;"></div>
<div class="b " style="left:167px;top:194px;width:1px;height:774px;background:#000;"></div>
<div class="b " style="left:387px;top:194px;width:1px;height:774px;background:#000;"></div>
<div class="b " style="left:441px;top:194px;width:1px;height:774px;background:#000;"></div>
<div class="b " style="left:603px;top:194px;width:1px;height:774px;background:#000;"></div>
<div class="b " style="left:722px;top:194px;width:1px;height:774px;background:#000;"></div>
<div class="b " style="left:0px;top:968px;width:1917px;height:28px;background:#e6e6e6;"></div>
<div class="b " style="left:0px;top:968px;width:1917px;height:1px;background:#c6c6c6;"></div>
<div class="b " style="left:0px;top:996px;width:1917px;height:1px;background:#c6c6c6;"></div>
<div class="b " style="left:0px;top:997px;width:1917px;height:11px;background:#f1f1f1;"></div>
<svg class="b" style="left:24px;top:977px" width="6" height="9" viewBox="0 0 6 9"><path d="M5.5 0.5V8.5L0.5 4.5Z" fill="#c6c6c6"/></svg>
<svg class="b" style="left:52px;top:977px" width="6" height="9" viewBox="0 0 6 9"><path d="M0.5 0.5V8.5L5.5 4.5Z" fill="#c6c6c6"/></svg>
<div class="b " style="left:98px;top:968px;width:54px;height:24.5px;background:#fff;border-left:1px solid #c6c6c6;border-right:1px solid #c6c6c6;border-bottom:2.5px solid #217346;"></div>
<span class="t " style="left:110.91px;top:974.00px;font-size:13px;line-height:15px;color:#217346;font-weight:bold;transform:scaleX(1.0466);transform-origin:50% 50%;">Data</span>
<span class="t " style="left:164.00px;top:974.00px;font-size:13px;line-height:15px;color:#444;transform:scaleX(0.9747);">Parameters</span>
<div class="b " style="left:243px;top:972px;width:1px;height:20px;background:#ababab;"></div>
<svg class="b" style="left:277px;top:973.5px" width="16" height="16" viewBox="0 0 16 16"><circle cx="8" cy="8" r="7.2" fill="none" stroke="#777" stroke-width="1.1"/><path d="M8 4.2V11.8M4.2 8H11.8" stroke="#666" stroke-width="1.5"/></svg>
<div class="b " style="left:1150px;top:976px;width:2px;height:2px;background:#a0a0a0;"></div>
<div class="b " style="left:1150px;top:980.5px;width:2px;height:2px;background:#a0a0a0;"></div>
<div class="b " style="left:1150px;top:985px;width:2px;height:2px;background:#a0a0a0;"></div>
<div class="b " style="left:1167px;top:975px;width:1000px;height:15px;background:#fff;border:1px solid #c0c0c0;"></div>
<div class="b " style="left:1181px;top:975px;width:1px;height:15px;background:#c0c0c0;"></div>
<svg class="b" style="left:1170px;top:978px" width="8" height="9" viewBox="0 0 8 9"><path d="M6.5 0.5V8.5L1 4.5Z" fill="#555"/></svg>
<span class="t " style="left:5.00px;top:1001.00px;font-size:11.5px;line-height:12px;color:#444444;transform:scaleX(0.9177);">Ready</span>
<div class="b " style="left:1626px;top:1000px;width:37px;height:8px;background:#c6c6c6;"></div>
<svg class="b" style="left:1637px;top:1001px" width="14" height="8" viewBox="0 0 14 8"><path d="M0.5 0V8M5 0V8M9.5 0V8M13.5 0V8M0 1.5H14M0 6.5H14" stroke="#555" fill="none"/></svg>
<svg class="b" style="left:1677px;top:1001px" width="12" height="8" viewBox="0 0 12 8"><path d="M0.5 8V0.5H11.5V8M3 3.5H9M3 6.5H9" stroke="#555" fill="none"/></svg>
<svg class="b" style="left:1713px;top:1001px" width="14" height="8" viewBox="0 0 14 8"><path d="M0.5 0V6.5H13.5V0M5 0V6.5" stroke="#555" fill="none"/></svg>
<div class="b " style="left:1746px;top:1005px;width:6px;height:2px;background:#444;"></div>
<div class="b " style="left:1755px;top:1005px;width:98px;height:1px;background:#8a8a8a;"></div>
<div class="b " style="left:1803px;top:1000px;width:3px;height:8px;background:#555;"></div>
<div class="b " style="left:1858px;top:1005px;width:9px;height:2px;background:#444;"></div>
<div class="b " style="left:1861.5px;top:1002px;width:2px;height:8px;background:#444;"></div>
<span class="t " style="left:1881.00px;top:1001.00px;font-size:12px;line-height:14px;color:#444;">100%</span>
<div class="b " style="left:18px;top:191px;width:1111px;height:780px;border:5px solid #ed1c24;"></div>
<div class="b " style="left:0px;top:0px;width:1px;height:1008px;background:#fff;"></div>
</div>
<div id="R">
<div style="position:absolute;left:-1284px;top:0;width:1917px;height:1008px">
<div class="b " style="left:1284px;top:0px;width:633px;height:1002px;background:#fff;"></div>
<div class="b " style="left:1284px;top:0px;width:633px;height:36px;background:#217346;"></div>
<div class="b " style="left:1284px;top:0px;width:633px;height:3px;background:#fff;"></div>
<div class="b " style="left:1823px;top:3px;width:2px;height:1px;background:#fff;"></div>
<div class="b " style="left:1875px;top:3px;width:2px;height:1px;background:#fff;"></div>
<div class="b " style="left:1898px;top:3px;width:2px;height:1px;background:#fff;"></div>
<div class="b " style="left:1284px;top:36px;width:633px;height:92px;background:#f1f1f1;"></div>
<div class="b " style="left:1284px;top:128px;width:633px;height:1px;background:#d8d8d8;"></div>
<div class="b " style="left:1284px;top:129px;width:633px;height:66px;background:#e6e6e6;"></div>
<div class="b " style="left:1348px;top:12px;width:60px;height:24px;background:#f1f1f1;"></div>
<span class="t " style="left:1305.00px;top:18.00px;font-size:11.5px;line-height:12px;color:#fff;">File</span>
<span class="t " style="left:1361.00px;top:18.00px;font-size:11.5px;line-height:12px;color:#217346;transform:scaleX(1.0922);">Home</span>
<span class="t " style="left:1423.00px;top:18.00px;font-size:11.5px;line-height:12px;color:#fff;transform:scaleX(0.9918);">Insert</span>
<span class="t " style="left:1481.00px;top:18.00px;font-size:11.5px;line-height:12px;color:#fff;">Page Layout</span>
<span class="t " style="left:1574.50px;top:18.00px;font-size:11.5px;line-height:12px;color:#fff;transform:scaleX(1.0225);">Formulas</span>
<span class="t " style="left:1652.50px;top:18.00px;font-size:11.5px;line-height:12px;color:#fff;transform:scaleX(0.9884);">Data</span>
<span class="t " style="left:1705.50px;top:18.00px;font-size:11.5px;line-height:12px;color:#fff;transform:scaleX(0.9809);">Review</span>
<span class="t " style="left:1771.00px;top:18.00px;font-size:11.5px;line-height:12px;color:#fff;transform:scaleX(1.0107);">View</span>
<span class="t " style="left:1825.50px;top:18.00px;font-size:11.5px;line-height:12px;color:#fff;transform:scaleX(1.0188);">Power Pivot</span>
<svg class="b" style="left:1298px;top:44px" width="29" height="31" viewBox="0 0 29 31"><rect x="0" y="3" width="24" height="24.5" rx="1.2" fill="#d7d2d5"/><rect x="5" y="1.8" width="14" height="5.2" rx="0.8" fill="#bfb9bd"/><rect x="9.3" y="0" width="5.4" height="3" rx="1" fill="#bfb9bd"/><rect x="11" y="1.2" width="2" height="1.3" fill="#e6e2e4"/><path d="M14.5 12H22.5L27.5 17V29.5H14.5Z" fill="#f6f2f7" stroke="#c9c5ca"/><path d="M22.5 12V17H27.5" fill="none" stroke="#c9c5ca"/></svg>
<span class="t " style="left:1296.50px;top:79.00px;font-size:11.5px;line-height:12px;color:#8e8e8e;transform:scaleX(0.9357);">Paste</span>
<svg class="b" style="left:1306.5px;top:99px" width="6" height="4" viewBox="0 0 6 4"><path d="M0 0H6 L3 3.5Z" fill="#c0c0c0"/></svg>
<svg class="b" style="left:1335px;top:42.3px" width="15" height="15" viewBox="0 0 15 15"><path d="M3 0.3L10 10M11.5 0.3L4.5 10" stroke="#484848" stroke-width="1.9" fill="none"/><circle cx="3.3" cy="12" r="2.3" fill="none" stroke="#2e75b6" stroke-width="1.3"/><circle cx="11.2" cy="12" r="2.3" fill="none" stroke="#2e75b6" stroke-width="1.3"/></svg>
<svg class="b" style="left:1334px;top:66px" width="16" height="14" viewBox="0 0 16 14"><path d="M0.5 0.5H6L8.5 3V9.5H0.5Z" fill="#fff" stroke="#555"/><path d="M6.5 3.5H12L15.5 7V13.5H6.5Z" fill="#fff" stroke="#555"/><path d="M2 3.5H5M2 5.5H5M8.5 8.5H13.5M8.5 10.5H13.5" stroke="#2e6db4" fill="none"/></svg>
<svg class="b" style="left:1355.5px;top:72px" width="6" height="4" viewBox="0 0 6 4"><path d="M0 0H6 L3 3.5Z" fill="#777"/></svg>
<svg class="b" style="left:1334px;top:89px" width="17" height="15" viewBox="0 0 17 15"><path d="M0.2 6.6L8 3.2L12.6 8.8L7 14Z" fill="#ebb96f"/><path d="M6.6 3.4L11.3 0.9L15 6L12.2 8.6Z" fill="#5a5a5a"/><path d="M12.3 1.2L14.3 0L16.2 2.4L14.2 3.8Z" fill="#5a5a5a"/></svg>
<span class="t " style="left:1294.50px;top:114.00px;font-size:11.5px;line-height:12px;color:#555;transform:scaleX(1.0159);">Clipboard</span>
<svg class="b" style="left:1359px;top:117px" width="7" height="7" viewBox="0 0 7 7"><path d="M0.5 5V0.5H5M3 3L6 6M6.5 3.5V6.5H3.5" fill="none" stroke="#777" stroke-width="1"/></svg>
<div class="b " style="left:1370px;top:40px;width:1px;height:84px;background:#d4d4d4;"></div>
<div class="b " style="left:1375px;top:47px;width:111px;height:23px;background:#fff;border:1px solid #c6c6c6;"></div>
<span class="t " style="left:1378.50px;top:53.00px;font-size:11.5px;line-height:12px;color:#444444;transform:scaleX(1.0120);">Calibri</span>
<svg class="b" style="left:1474.5px;top:57px" width="6" height="4" viewBox="0 0 6 4"><path d="M0 0H6 L3 3.5Z" fill="#666"/></svg>
<div class="b " style="left:1486px;top:47px;width:43px;height:23px;background:#fff;border:1px solid #c6c6c6;"></div>
<span class="t " style="left:1489.00px;top:53.00px;font-size:11.5px;line-height:12px;color:#444444;transform:scaleX(0.8388);">11</span>
<svg class="b" style="left:1517.5px;top:57px" width="6" height="4" viewBox="0 0 6 4"><path d="M0 0H6 L3 3.5Z" fill="#666"/></svg>
<span class="t " style="left:1534.50px;top:51.00px;font-size:14.5px;line-height:16px;color:#444;transform:scaleX(1.0856);">A</span>
<svg class="b" style="left:1542.5px;top:50px" width="6" height="4" viewBox="0 0 6 4"><path d="M0 4H6L3 0Z" fill="#2e6db4"/></svg>
<span class="t " style="left:1558.00px;top:54.00px;font-size:11.5px;line-height:12px;color:#444;transform:scaleX(0.9776);">A</span>
<svg class="b" style="left:1564.5px;top:50.5px" width="6" height="4" viewBox="0 0 6 4"><path d="M0 0H6L3 4Z" fill="#2e6db4"/></svg>
<span class="t " style="left:1381.00px;top:82.00px;font-size:12.5px;line-height:14px;color:#444;font-weight:bold;transform:scaleX(0.8858);">B</span>
<span class="t " style="left:1404.50px;top:81.00px;font-size:14px;line-height:16px;color:#444;font-weight:bold;font-style:italic;font-family:'Liberation Serif',serif;">I</span>
<span class="t " style="left:1424.50px;top:82.00px;font-size:12.5px;line-height:14px;color:#444;">U</span>
<div class="b " style="left:1424.5px;top:94px;width:9px;height:1px;background:#444;"></div>
<svg class="b" style="left:1442.5px;top:87.5px" width="6" height="4" viewBox="0 0 6 4"><path d="M0 0H6 L3 3.5Z" fill="#777"/></svg>
<div class="b " style="left:1457px;top:78px;width:1px;height:22px;background:#d4d4d4;"></div>
<svg class="b" style="left:1465px;top:81px" width="15" height="15" viewBox="0 0 15 15"><g shape-rendering="crispEdges"><path d="M1 1.5H14M1 7.5H14M1.5 1V13M7.5 1V13M13.5 1V13" stroke="#555" stroke-dasharray="1 1" fill="none"/><path d="M1 13.5H14" stroke="#444" stroke-width="1"/></g></svg>
<svg class="b" style="left:1486px;top:87.5px" width="6" height="4" viewBox="0 0 6 4"><path d="M0 0H6 L3 3.5Z" fill="#777"/></svg>
<div class="b " style="left:1500px;top:78px;width:1px;height:22px;background:#d4d4d4;"></div>
<svg class="b" style="left:1507px;top:80.5px" width="17" height="12" viewBox="0 0 17 12"><path d="M3 7L8 2L13 7L8 11.5Z" fill="#fff" stroke="#555" stroke-width="1.1"/><path d="M6.5 3.5V1.2C6.5 0 8.8 0 8.8 1.2V3" fill="none" stroke="#555"/><path d="M13.2 5.5C14.8 7 15.5 8.5 14.5 10.2C13.5 9.5 13.3 7.5 13.2 5.5Z" fill="#2e6db4"/></svg>
<div class="b " style="left:1507.5px;top:93px;width:16px;height:4px;background:#ffef00;"></div>
<svg class="b" style="left:1529.5px;top:87.5px" width="6" height="4" viewBox="0 0 6 4"><path d="M0 0H6 L3 3.5Z" fill="#777"/></svg>
<span class="t " style="left:1545.50px;top:81.00px;font-size:13.5px;line-height:15px;color:#444;font-weight:bold;transform:scaleX(1.0051);">A</span>
<div class="b " style="left:1542px;top:93px;width:16px;height:4px;background:#ee1111;"></div>
<svg class="b" style="left:1563px;top:87.5px" width="6" height="4" viewBox="0 0 6 4"><path d="M0 0H6 L3 3.5Z" fill="#777"/></svg>
<span class="t " style="left:1454.00px;top:114.00px;font-size:11.5px;line-height:12px;color:#555;transform:scaleX(1.0217);">Font</span>
<svg class="b" style="left:1566px;top:117px" width="7" height="7" viewBox="0 0 7 7"><path d="M0.5 5V0.5H5M3 3L6 6M6.5 3.5V6.5H3.5" fill="none" stroke="#777" stroke-width="1"/></svg>
<div class="b " style="left:1577px;top:40px;width:1px;height:84px;background:#d4d4d4;"></div>
<div class="b " style="left:1586px;top:50px;width:14px;height:1px;background:#555;"></div>
<div class="b " style="left:1586px;top:53px;width:14px;height:1px;background:#555;"></div>
<div class="b " style="left:1586px;top:56px;width:14px;height:1px;background:#555;"></div>
<div class="b " style="left:1604px;top:47px;width:22px;height:23px;background:#c6c6c6;"></div>
<div class="b " style="left:1608px;top:54px;width:14px;height:1px;background:#555;"></div>
<div class="b " style="left:1608px;top:57px;width:14px;height:1px;background:#555;"></div>
<div class="b " style="left:1608px;top:60px;width:14px;height:1px;background:#555;"></div>
<div class="b " style="left:1630px;top:59px;width:14px;height:1px;background:#555;"></div>
<div class="b " style="left:1630px;top:62px;width:14px;height:1px;background:#555;"></div>
<div class="b " style="left:1630px;top:65px;width:14px;height:1px;background:#555;"></div>
<div class="b " style="left:1652px;top:47px;width:1px;height:22px;background:#d4d4d4;"></div>
<svg class="b" style="left:1659px;top:49px" width="18" height="17" viewBox="0 0 18 17"><text transform="translate(4.2,13.6) rotate(-45)" font-family="Liberation Sans,sans-serif" font-size="10" fill="#444">ab</text><path d="M7.4 15.8L16.6 6.6M12.8 6.6H16.6V10.4" stroke="#555" stroke-width="1.1" fill="none"/></svg>
<svg class="b" style="left:1679px;top:57px" width="6" height="4" viewBox="0 0 6 4"><path d="M0 0H6 L3 3.5Z" fill="#777"/></svg>
<div class="b " style="left:1705px;top:46px;width:1px;height:55px;background:#d4d4d4;"></div>
<div class="b " style="left:1710px;top:47px;width:81px;height:23px;background:#c6c6c6;"></div>
<svg class="b" style="left:1713px;top:50px" width="17" height="15" viewBox="0 0 17 15"><rect x="0.5" y="0.5" width="9" height="4" fill="#fff" stroke="#6a6a6a"/><rect x="0.5" y="8.5" width="9" height="6" fill="#fff" stroke="#6a6a6a"/><path d="M2 2.5H13.8M2 10.5H8M2 12.5H8" stroke="#2e75b6" fill="none"/><path d="M15.5 4.5C15.5 8 13.5 9.5 10.8 9.5M13 7.2L10.7 9.5L13 11.8" stroke="#2e75b6" stroke-width="1.1" fill="none"/></svg>
<span class="t " style="left:1732.00px;top:53.00px;font-size:11.5px;line-height:12px;color:#444444;">Wrap Text</span>
<div class="b " style="left:1582px;top:78px;width:22px;height:23px;background:#c6c6c6;"></div>
<div class="b " style="left:1586px;top:84px;width:14px;height:1px;background:#555;"></div>
<div class="b " style="left:1608px;top:84px;width:14px;height:1px;background:#555;"></div>
<div class="b " style="left:1630px;top:84px;width:14px;height:1px;background:#555;"></div>
<div class="b " style="left:1586px;top:87px;width:9px;height:1px;background:#555;"></div>
<div class="b " style="left:1610.5px;top:87px;width:9px;height:1px;background:#555;"></div>
<div class="b " style="left:1635px;top:87px;width:9px;height:1px;background:#555;"></div>
<div class="b " style="left:1586px;top:90px;width:14px;height:1px;background:#555;"></div>
<div class="b " style="left:1608px;top:90px;width:14px;height:1px;background:#555;"></div>
<div class="b " style="left:1630px;top:90px;width:14px;height:1px;background:#555;"></div>
<div class="b " style="left:1586px;top:93px;width:9px;height:1px;background:#555;"></div>
<div class="b " style="left:1610.5px;top:93px;width:9px;height:1px;background:#555;"></div>
<div class="b " style="left:1635px;top:93px;width:9px;height:1px;background:#555;"></div>
<div class="b " style="left:1652px;top:78px;width:1px;height:22px;background:#d4d4d4;"></div>
<div class="b " style="left:1659.5px;top:82px;width:16px;height:1px;background:#555;"></div>
<div class="b " style="left:1667.5px;top:85px;width:8px;height:1px;background:#555;"></div>
<div class="b " style="left:1667.5px;top:88px;width:8px;height:1px;background:#555;"></div>
<div class="b " style="left:1667.5px;top:91px;width:8px;height:1px;background:#555;"></div>
<div class="b " style="left:1659.5px;top:94px;width:16px;height:1px;background:#555;"></div>
<div class="b " style="left:1681.5px;top:82px;width:16px;height:1px;background:#555;"></div>
<div class="b " style="left:1689.5px;top:85px;width:8px;height:1px;background:#555;"></div>
<div class="b " style="left:1689.5px;top:88px;width:8px;height:1px;background:#555;"></div>
<div class="b " style="left:1689.5px;top:91px;width:8px;height:1px;background:#555;"></div>
<div class="b " style="left:1681.5px;top:94px;width:16px;height:1px;background:#555;"></div>
<svg class="b" style="left:1659.5px;top:84px" width="8" height="7" viewBox="0 0 8 7"><path d="M7.5 3.5H1M3.5 0.8L0.8 3.5L3.5 6.2" stroke="#2e6db4" stroke-width="1.3" fill="none"/></svg>
<svg class="b" style="left:1681px;top:84px" width="8" height="7" viewBox="0 0 8 7"><path d="M0.5 3.5H7M4.5 0.8L7.2 3.5L4.5 6.2" stroke="#2e6db4" stroke-width="1.3" fill="none"/></svg>
<svg class="b" style="left:1712.5px;top:81px" width="16" height="15" viewBox="0 0 16 15"><path d="M0.5 0.5H14.5V14.5H0.5ZM0.5 4.5H14.5M0.5 10.5H14.5M7.5 0.5V4.5M7.5 10.5V14.5" fill="#fff" stroke="#666"/><path d="M2.5 7.5H12.5M4.5 5.7L2.5 7.5L4.5 9.3M10.5 5.7L12.5 7.5L10.5 9.3" stroke="#2e6db4" fill="none"/></svg>
<span class="t " style="left:1732.00px;top:84.00px;font-size:11.5px;line-height:12px;color:#444444;transform:scaleX(1.0416);">Merge &amp; Center</span>
<svg class="b" style="left:1825.5px;top:87.5px" width="6" height="4" viewBox="0 0 6 4"><path d="M0 0H6 L3 3.5Z" fill="#777"/></svg>
<span class="t " style="left:1675.00px;top:114.00px;font-size:11.5px;line-height:12px;color:#555;transform:scaleX(1.0269);">Alignment</span>
<svg class="b" style="left:1829px;top:117px" width="7" height="7" viewBox="0 0 7 7"><path d="M0.5 5V0.5H5M3 3L6 6M6.5 3.5V6.5H3.5" fill="none" stroke="#777" stroke-width="1"/></svg>
<div class="b " style="left:1841px;top:40px;width:1px;height:84px;background:#d4d4d4;"></div>
<div class="b " style="left:1846px;top:47px;width:131px;height:23px;background:#fff;border:1px solid #c6c6c6;"></div>
<span class="t " style="left:1849.50px;top:53.00px;font-size:11.5px;line-height:12px;color:#444444;transform:scaleX(0.9538);">General</span>
<svg class="b" style="left:1966px;top:57px" width="6" height="4" viewBox="0 0 6 4"><path d="M0 0H6 L3 3.5Z" fill="#666"/></svg>
<svg class="b" style="left:1848.5px;top:81px" width="17" height="17" viewBox="0 0 17 17"><rect x="0.3" y="0.3" width="16" height="8.6" fill="#2e75b6"/><ellipse cx="8.3" cy="4.6" rx="4.6" ry="3" fill="#fff"/><circle cx="8.3" cy="4.6" r="1.7" fill="#2e75b6"/><rect x="0.3" y="0.3" width="2.2" height="2" fill="#fff"/><rect x="14.1" y="0.3" width="2.2" height="2" fill="#fff"/><rect x="0.3" y="6.9" width="2.2" height="2" fill="#fff"/><g fill="#f0c27b" stroke="#f1f1f1" stroke-width="0.6"><ellipse cx="12.5" cy="10" rx="3.6" ry="1.5"/><ellipse cx="12.5" cy="8" rx="3.6" ry="1.5"/><ellipse cx="8.5" cy="14.3" rx="4" ry="1.6"/><ellipse cx="8.5" cy="12.2" rx="4" ry="1.6"/><ellipse cx="8.5" cy="10.1" rx="4" ry="1.6"/></g></svg>
<svg class="b" style="left:1870.5px;top:88px" width="6" height="4" viewBox="0 0 6 4"><path d="M0 0H6 L3 3.5Z" fill="#777"/></svg>
<span class="t " style="left:1885.00px;top:81.00px;font-size:15px;line-height:17px;color:#444;transform:scaleX(0.9368);">%</span>
<span class="t " style="left:1909.00px;top:72.00px;font-size:20px;line-height:22px;color:#444;font-weight:bold;font-family:'Liberation Serif',serif;">,</span>
<div class="b " style="left:1928px;top:78px;width:1px;height:22px;background:#d4d4d4;"></div>
<svg class="b" style="left:1935.5px;top:81px" width="16" height="15" viewBox="0 0 16 15"><path d="M0.8 3.5H6M3 1.2L0.8 3.5L3 5.8" stroke="#2e6db4" stroke-width="1.3" fill="none"/><text x="6.5" y="7" font-family="Liberation Sans,sans-serif" font-size="8.5" fill="#444">.0</text><text x="2" y="14.5" font-family="Liberation Sans,sans-serif" font-size="8.5" fill="#444">.00</text></svg>
<svg class="b" style="left:1957.5px;top:81px" width="16" height="15" viewBox="0 0 16 15"><text x="3" y="7" font-family="Liberation Sans,sans-serif" font-size="8.5" fill="#444">.00</text><path d="M0.5 10.5H6M3.8 8.2L6 10.5L3.8 12.8" stroke="#2e6db4" stroke-width="1.3" fill="none"/><text x="7" y="14.5" font-family="Liberation Sans,sans-serif" font-size="8.5" fill="#444">.0</text></svg>
<span class="t " style="left:1883.50px;top:114.00px;font-size:11.5px;line-height:12px;color:#555;transform:scaleX(0.9782);">Number</span>
<svg class="b" style="left:1970px;top:117px" width="7" height="7" viewBox="0 0 7 7"><path d="M0.5 5V0.5H5M3 3L6 6M6.5 3.5V6.5H3.5" fill="none" stroke="#777" stroke-width="1"/></svg>
<div class="b " style="left:1981px;top:40px;width:1px;height:84px;background:#d4d4d4;"></div>
<div class="b " style="left:1290px;top:139px;width:102px;height:26px;background:#fff;border:1px solid #d0d0d0;"></div>
<span class="t " style="left:1297.00px;top:146.00px;font-size:12px;line-height:14px;color:#444;">E34</span>
<svg class="b" style="left:1378px;top:149.5px" width="7" height="4" viewBox="0 0 7 4"><path d="M0 0H7 L3.5 3.5Z" fill="#777"/></svg>
<div class="b " style="left:1406px;top:147px;width:2px;height:2px;background:#b0b0b0;"></div>
<div class="b " style="left:1406px;top:151px;width:2px;height:2px;background:#b0b0b0;"></div>
<div class="b " style="left:1406px;top:155px;width:2px;height:2px;background:#b0b0b0;"></div>
<div class="b " style="left:1422px;top:139px;width:110px;height:26px;background:#fff;border:1px solid #d0d0d0;"></div>
<svg class="b" style="left:1435px;top:146px" width="12" height="12" viewBox="0 0 12 12"><path d="M1.5 1.5L10.5 10.5M10.5 1.5L1.5 10.5" stroke="#b7b7b7" stroke-width="1.6" fill="none"/></svg>
<svg class="b" style="left:1470px;top:146px" width="14" height="12" viewBox="0 0 14 12"><path d="M1.5 6.5L5 10L12.5 1.5" stroke="#b7b7b7" stroke-width="1.8" fill="none"/></svg>
<span class="t " style="left:1507.00px;top:143.00px;font-size:15px;line-height:17px;color:#444;font-weight:bold;font-style:italic;font-family:'Liberation Serif',serif;">f</span>
<span class="t " style="left:1512.00px;top:149.00px;font-size:10px;line-height:11px;color:#444;font-weight:bold;font-style:italic;font-family:'Liberation Serif',serif;">x</span>
<div class="b " style="left:1535px;top:139px;width:387px;height:26px;background:#fff;border:1px solid #d0d0d0;"></div>
<span class="t " style="left:1543.00px;top:140.00px;font-size:21px;line-height:23px;color:#ed1c24;font-weight:bold;transform:scaleX(1.0047);">Person identification documents</span>
<div class="b " style="left:1310px;top:195px;width:607px;height:756px;background:#fff;"></div>
<div class="b " style="left:1285px;top:195px;width:25px;height:756px;background:#e6e6e6;"></div>
<div class="b " style="left:1310px;top:175px;width:1px;height:19px;background:#c4c4c4;"></div>
<div class="b " style="left:1379px;top:175px;width:1px;height:19px;background:#c4c4c4;"></div>
<div class="b " style="left:1484px;top:175px;width:1px;height:19px;background:#c4c4c4;"></div>
<div class="b " style="left:1589px;top:175px;width:1px;height:19px;background:#c4c4c4;"></div>
<div class="b " style="left:1694px;top:175px;width:1px;height:19px;background:#c4c4c4;"></div>
<div class="b " style="left:1799px;top:175px;width:1px;height:19px;background:#c4c4c4;"></div>
<div class="b " style="left:1904px;top:175px;width:1px;height:19px;background:#c4c4c4;"></div>
<div class="b " style="left:1695px;top:175px;width:104px;height:19px;background:#d2d2d2;"></div>
<div class="b " style="left:1285px;top:194px;width:1917px;height:1px;background:#a6a6a6;"></div>
<div class="b " style="left:1695px;top:193px;width:104px;height:2px;background:#217346;"></div>
<svg class="b" style="left:1295px;top:179px" width="12" height="12" viewBox="0 0 12 12"><path d="M12 0V12H0Z" fill="#b5b5b5"/></svg>
<span class="t " style="left:1340.66px;top:178.00px;font-size:13px;line-height:15px;color:#262626;transform-origin:50% 50%;">A</span>
<span class="t " style="left:1427.66px;top:178.00px;font-size:13px;line-height:15px;color:#262626;transform:scaleX(0.9405);transform-origin:50% 50%;">B</span>
<span class="t " style="left:1532.30px;top:178.00px;font-size:13px;line-height:15px;color:#262626;transform:scaleX(0.8519);transform-origin:50% 50%;">C</span>
<span class="t " style="left:1637.30px;top:178.00px;font-size:13px;line-height:15px;color:#262626;transform:scaleX(0.9834);transform-origin:50% 50%;">D</span>
<span class="t " style="left:1742.66px;top:178.00px;font-size:13px;line-height:15px;color:#217346;transform:scaleX(0.8450);transform-origin:50% 50%;">E</span>
<span class="t " style="left:1848.03px;top:178.00px;font-size:13px;line-height:15px;color:#262626;transform:scaleX(0.8681);transform-origin:50% 50%;">F</span>
<div class="b " style="left:1310px;top:195px;width:594px;height:19px;background:#ccccff;"></div>
<span class="t " style="left:1314.66px;top:198.00px;font-size:13px;line-height:15px;color:#000;font-weight:bold;transform:scaleX(0.9784);transform-origin:50% 50%;">Person ID</span>
<span class="t " style="left:1385.05px;top:198.00px;font-size:13px;line-height:15px;color:#000;font-weight:bold;transform:scaleX(1.0223);transform-origin:50% 50%;">Document type</span>
<span class="t " style="left:1506.66px;top:198.00px;font-size:13px;line-height:15px;color:#000;font-weight:bold;transform:scaleX(1.0353);transform-origin:50% 50%;">Date from</span>
<span class="t " style="left:1619.97px;top:198.00px;font-size:13px;line-height:15px;color:#000;font-weight:bold;transform:scaleX(1.0394);transform-origin:50% 50%;">Date to</span>
<span class="t " style="left:1727.13px;top:198.00px;font-size:13px;line-height:15px;color:#000;font-weight:bold;transform:scaleX(0.9729);transform-origin:50% 50%;">Status</span>
<span class="t " style="left:1827.09px;top:198.00px;font-size:13px;line-height:15px;color:#000;font-weight:bold;transform-origin:50% 50%;">Country</span>
<div class="b " style="left:1285px;top:214px;width:25px;height:1px;background:#c8c8c8;"></div>
<div class="b " style="left:1310px;top:214px;width:594px;height:1px;background:#000;"></div>
<span class="t " style="left:1294.18px;top:198.00px;font-size:13px;line-height:15px;color:#262626;transform:scaleX(0.9676);transform-origin:50% 50%;">1</span>
<div class="b " style="left:1285px;top:234px;width:25px;height:1px;background:#c8c8c8;"></div>
<div class="b " style="left:1310px;top:234px;width:594px;height:1px;background:#000;"></div>
<span class="t " style="left:1294.18px;top:218.00px;font-size:13px;line-height:15px;color:#262626;transform:scaleX(0.9676);transform-origin:50% 50%;">2</span>
<span class="t " style="left:1326.16px;top:218.00px;font-size:13px;line-height:15px;color:#000;transform:scaleX(0.9735);transform-origin:100% 50%;">1234573</span>
<span class="t " style="left:1382.00px;top:218.00px;font-size:13px;line-height:15px;color:#000;transform:scaleX(1.0207);">Passport</span>
<span class="t " style="left:1592.00px;top:218.00px;font-size:13px;line-height:15px;color:#000;transform:scaleX(0.9765);">31.05.2027</span>
<span class="t " style="left:1697.00px;top:218.00px;font-size:13px;line-height:15px;color:#000;transform:scaleX(0.9281);">ACTIVE</span>
<span class="t " style="left:1802.00px;top:218.00px;font-size:13px;line-height:15px;color:#000;transform:scaleX(1.0376);">Croatia</span>
<div class="b " style="left:1285px;top:254px;width:25px;height:1px;background:#c8c8c8;"></div>
<div class="b " style="left:1310px;top:254px;width:594px;height:1px;background:#000;"></div>
<span class="t " style="left:1294.18px;top:238.00px;font-size:13px;line-height:15px;color:#262626;transform:scaleX(0.9676);transform-origin:50% 50%;">3</span>
<span class="t " style="left:1326.16px;top:238.00px;font-size:13px;line-height:15px;color:#000;transform:scaleX(0.9735);transform-origin:100% 50%;">1234596</span>
<span class="t " style="left:1382.00px;top:238.00px;font-size:13px;line-height:15px;color:#000;transform:scaleX(1.0207);">Passport</span>
<span class="t " style="left:1487.00px;top:238.00px;font-size:13px;line-height:15px;color:#000;transform:scaleX(0.9765);">31.05.2021</span>
<span class="t " style="left:1592.00px;top:238.00px;font-size:13px;line-height:15px;color:#000;transform:scaleX(0.9765);">31.05.2027</span>
<span class="t " style="left:1697.00px;top:238.00px;font-size:13px;line-height:15px;color:#000;transform:scaleX(0.9281);">ACTIVE</span>
<span class="t " style="left:1802.00px;top:238.00px;font-size:13px;line-height:15px;color:#000;transform:scaleX(1.0526);">Albania</span>
<div class="b " style="left:1285px;top:274px;width:25px;height:1px;background:#c8c8c8;"></div>
<div class="b " style="left:1310px;top:274px;width:594px;height:1px;background:#000;"></div>
<span class="t " style="left:1294.18px;top:258.00px;font-size:13px;line-height:15px;color:#262626;transform:scaleX(0.9676);transform-origin:50% 50%;">4</span>
<span class="t " style="left:1326.16px;top:258.00px;font-size:13px;line-height:15px;color:#000;transform:scaleX(0.9735);transform-origin:100% 50%;">1234615</span>
<span class="t " style="left:1382.00px;top:258.00px;font-size:13px;line-height:15px;color:#000;transform:scaleX(1.0207);">Passport</span>
<span class="t " style="left:1487.00px;top:258.00px;font-size:13px;line-height:15px;color:#000;transform:scaleX(0.9765);">31.03.2016</span>
<span class="t " style="left:1592.00px;top:258.00px;font-size:13px;line-height:15px;color:#000;transform:scaleX(0.9765);">31.03.2021</span>
<span class="t " style="left:1697.00px;top:258.00px;font-size:13px;line-height:15px;color:#000;transform:scaleX(0.9281);">ACTIVE</span>
<span class="t " style="left:1802.00px;top:258.00px;font-size:13px;line-height:15px;color:#000;transform:scaleX(1.0424);">Germany</span>
<div class="b " style="left:1285px;top:294px;width:25px;height:1px;background:#c8c8c8;"></div>
<div class="b " style="left:1310px;top:294px;width:594px;height:1px;background:#000;"></div>
<span class="t " style="left:1294.18px;top:278.00px;font-size:13px;line-height:15px;color:#262626;transform:scaleX(0.9676);transform-origin:50% 50%;">5</span>
<span class="t " style="left:1326.16px;top:278.00px;font-size:13px;line-height:15px;color:#000;transform:scaleX(0.9735);transform-origin:100% 50%;">1234616</span>
<span class="t " style="left:1382.00px;top:278.00px;font-size:13px;line-height:15px;color:#000;transform:scaleX(1.0207);">Passport</span>
<span class="t " style="left:1487.00px;top:278.00px;font-size:13px;line-height:15px;color:#000;transform:scaleX(0.9765);">31.03.2016</span>
<span class="t " style="left:1592.00px;top:278.00px;font-size:13px;line-height:15px;color:#000;transform:scaleX(0.9765);">31.03.2021</span>
<span class="t " style="left:1697.00px;top:278.00px;font-size:13px;line-height:15px;color:#000;transform:scaleX(0.9281);">ACTIVE</span>
<span class="t " style="left:1802.00px;top:278.00px;font-size:13px;line-height:15px;color:#000;transform:scaleX(1.0924);">Italy</span>
<div class="b " style="left:1285px;top:314px;width:25px;height:1px;background:#c8c8c8;"></div>
<div class="b " style="left:1310px;top:314px;width:594px;height:1px;background:#000;"></div>
<span class="t " style="left:1294.18px;top:298.00px;font-size:13px;line-height:15px;color:#262626;transform:scaleX(0.9676);transform-origin:50% 50%;">6</span>
<span class="t " style="left:1326.16px;top:298.00px;font-size:13px;line-height:15px;color:#000;transform:scaleX(0.9735);transform-origin:100% 50%;">1234628</span>
<span class="t " style="left:1382.00px;top:298.00px;font-size:13px;line-height:15px;color:#000;transform:scaleX(1.0207);">Passport</span>
<span class="t " style="left:1592.00px;top:298.00px;font-size:13px;line-height:15px;color:#000;transform:scaleX(0.9912);">30.11.2021</span>
<span class="t " style="left:1697.00px;top:298.00px;font-size:13px;line-height:15px;color:#000;transform:scaleX(0.9281);">ACTIVE</span>
<span class="t " style="left:1802.00px;top:298.00px;font-size:13px;line-height:15px;color:#000;transform:scaleX(1.0509);">Colombia</span>
<div class="b " style="left:1285px;top:334px;width:25px;height:1px;background:#c8c8c8;"></div>
<div class="b " style="left:1310px;top:334px;width:594px;height:1px;background:#000;"></div>
<span class="t " style="left:1294.18px;top:318.00px;font-size:13px;line-height:15px;color:#262626;transform:scaleX(0.9676);transform-origin:50% 50%;">7</span>
<span class="t " style="left:1326.16px;top:318.00px;font-size:13px;line-height:15px;color:#000;transform:scaleX(0.9735);transform-origin:100% 50%;">1234571</span>
<span class="t " style="left:1382.00px;top:318.00px;font-size:13px;line-height:15px;color:#000;transform:scaleX(1.0207);">Passport</span>
<span class="t " style="left:1592.00px;top:318.00px;font-size:13px;line-height:15px;color:#000;transform:scaleX(0.9912);">30.11.2020</span>
<span class="t " style="left:1697.00px;top:318.00px;font-size:13px;line-height:15px;color:#000;transform:scaleX(0.9281);">ACTIVE</span>
<span class="t " style="left:1802.00px;top:318.00px;font-size:13px;line-height:15px;color:#000;transform:scaleX(1.0646);">Argentina</span>
<div class="b " style="left:1285px;top:354px;width:25px;height:1px;background:#c8c8c8;"></div>
<div class="b " style="left:1310px;top:354px;width:594px;height:1px;background:#000;"></div>
<span class="t " style="left:1294.18px;top:338.00px;font-size:13px;line-height:15px;color:#262626;transform:scaleX(0.9676);transform-origin:50% 50%;">8</span>
<span class="t " style="left:1326.16px;top:338.00px;font-size:13px;line-height:15px;color:#000;transform:scaleX(0.9735);transform-origin:100% 50%;">1234638</span>
<span class="t " style="left:1382.00px;top:338.00px;font-size:13px;line-height:15px;color:#000;transform:scaleX(1.0207);">Passport</span>
<span class="t " style="left:1592.00px;top:338.00px;font-size:13px;line-height:15px;color:#000;transform:scaleX(0.9765);">30.10.2024</span>
<span class="t " style="left:1697.00px;top:338.00px;font-size:13px;line-height:15px;color:#000;transform:scaleX(0.9281);">ACTIVE</span>
<span class="t " style="left:1802.00px;top:338.00px;font-size:13px;line-height:15px;color:#000;transform:scaleX(1.0247);">Venezuela</span>
<div class="b " style="left:1285px;top:374px;width:25px;height:1px;background:#c8c8c8;"></div>
<div class="b " style="left:1310px;top:374px;width:594px;height:1px;background:#000;"></div>
<span class="t " style="left:1294.18px;top:358.00px;font-size:13px;line-height:15px;color:#262626;transform:scaleX(0.9676);transform-origin:50% 50%;">9</span>
<span class="t " style="left:1326.16px;top:358.00px;font-size:13px;line-height:15px;color:#000;transform:scaleX(0.9735);transform-origin:100% 50%;">1234636</span>
<span class="t " style="left:1382.00px;top:358.00px;font-size:13px;line-height:15px;color:#000;transform:scaleX(1.0207);">Passport</span>
<span class="t " style="left:1592.00px;top:358.00px;font-size:13px;line-height:15px;color:#000;transform:scaleX(0.9765);">30.08.2026</span>
<span class="t " style="left:1697.00px;top:358.00px;font-size:13px;line-height:15px;color:#000;transform:scaleX(0.9281);">ACTIVE</span>
<span class="t " style="left:1802.00px;top:358.00px;font-size:13px;line-height:15px;color:#000;">El Salvador</span>
<div class="b " style="left:1285px;top:394px;width:25px;height:1px;background:#c8c8c8;"></div>
<div class="b " style="left:1310px;top:394px;width:594px;height:1px;background:#000;"></div>
<span class="t " style="left:1290.57px;top:378.00px;font-size:13px;line-height:15px;color:#262626;transform:scaleX(0.9676);transform-origin:50% 50%;">10</span>
<span class="t " style="left:1326.16px;top:378.00px;font-size:13px;line-height:15px;color:#000;transform:scaleX(0.9735);transform-origin:100% 50%;">1234610</span>
<span class="t " style="left:1382.00px;top:378.00px;font-size:13px;line-height:15px;color:#000;transform:scaleX(1.0207);">Passport</span>
<span class="t " style="left:1592.00px;top:378.00px;font-size:13px;line-height:15px;color:#000;transform:scaleX(0.9912);">29.11.2021</span>
<span class="t " style="left:1697.00px;top:378.00px;font-size:13px;line-height:15px;color:#000;transform:scaleX(0.9281);">ACTIVE</span>
<span class="t " style="left:1802.00px;top:378.00px;font-size:13px;line-height:15px;color:#000;transform:scaleX(0.9380);">USA</span>
<div class="b " style="left:1285px;top:414px;width:25px;height:1px;background:#c8c8c8;"></div>
<div class="b " style="left:1310px;top:414px;width:594px;height:1px;background:#000;"></div>
<span class="t " style="left:1291.05px;top:398.00px;font-size:13px;line-height:15px;color:#262626;transform:scaleX(1.0370);transform-origin:50% 50%;">11</span>
<span class="t " style="left:1326.16px;top:398.00px;font-size:13px;line-height:15px;color:#000;transform:scaleX(0.9735);transform-origin:100% 50%;">1234706</span>
<span class="t " style="left:1382.00px;top:398.00px;font-size:13px;line-height:15px;color:#000;transform:scaleX(1.0207);">Passport</span>
<span class="t " style="left:1487.00px;top:398.00px;font-size:13px;line-height:15px;color:#000;transform:scaleX(0.9765);">28.10.2019</span>
<span class="t " style="left:1592.00px;top:398.00px;font-size:13px;line-height:15px;color:#000;transform:scaleX(0.9765);">28.10.2029</span>
<span class="t " style="left:1697.00px;top:398.00px;font-size:13px;line-height:15px;color:#000;transform:scaleX(0.9281);">ACTIVE</span>
<span class="t " style="left:1802.00px;top:398.00px;font-size:13px;line-height:15px;color:#000;transform:scaleX(1.0054);">France</span>
<div class="b " style="left:1285px;top:434px;width:25px;height:1px;background:#c8c8c8;"></div>
<div class="b " style="left:1310px;top:434px;width:594px;height:1px;background:#000;"></div>
<span class="t " style="left:1290.57px;top:418.00px;font-size:13px;line-height:15px;color:#262626;transform:scaleX(0.9676);transform-origin:50% 50%;">12</span>
<span class="t " style="left:1326.16px;top:418.00px;font-size:13px;line-height:15px;color:#000;transform:scaleX(0.9735);transform-origin:100% 50%;">1234667</span>
<span class="t " style="left:1382.00px;top:418.00px;font-size:13px;line-height:15px;color:#000;transform:scaleX(1.0207);">Passport</span>
<span class="t " style="left:1592.00px;top:418.00px;font-size:13px;line-height:15px;color:#000;transform:scaleX(0.9765);">28.10.2025</span>
<span class="t " style="left:1697.00px;top:418.00px;font-size:13px;line-height:15px;color:#000;transform:scaleX(0.9281);">ACTIVE</span>
<span class="t " style="left:1802.00px;top:418.00px;font-size:13px;line-height:15px;color:#000;transform:scaleX(0.9645);">UK</span>
<div class="b " style="left:1285px;top:454px;width:25px;height:1px;background:#c8c8c8;"></div>
<div class="b " style="left:1310px;top:454px;width:594px;height:1px;background:#000;"></div>
<span class="t " style="left:1290.57px;top:438.00px;font-size:13px;line-height:15px;color:#262626;transform:scaleX(0.9676);transform-origin:50% 50%;">13</span>
<span class="t " style="left:1326.16px;top:438.00px;font-size:13px;line-height:15px;color:#000;transform:scaleX(0.9735);transform-origin:100% 50%;">1234696</span>
<span class="t " style="left:1382.00px;top:438.00px;font-size:13px;line-height:15px;color:#000;transform:scaleX(1.0207);">Passport</span>
<span class="t " style="left:1487.00px;top:438.00px;font-size:13px;line-height:15px;color:#000;transform:scaleX(0.9765);">29.10.2018</span>
<span class="t " style="left:1592.00px;top:438.00px;font-size:13px;line-height:15px;color:#000;transform:scaleX(0.9765);">28.10.2024</span>
<span class="t " style="left:1697.00px;top:438.00px;font-size:13px;line-height:15px;color:#000;transform:scaleX(0.9281);">ACTIVE</span>
<span class="t " style="left:1802.00px;top:438.00px;font-size:13px;line-height:15px;color:#000;transform:scaleX(1.0968);">Montenegro</span>
<div class="b " style="left:1285px;top:474px;width:25px;height:1px;background:#c8c8c8;"></div>
<div class="b " style="left:1310px;top:474px;width:594px;height:1px;background:#000;"></div>
<span class="t " style="left:1290.57px;top:458.00px;font-size:13px;line-height:15px;color:#262626;transform:scaleX(0.9676);transform-origin:50% 50%;">14</span>
<span class="t " style="left:1326.16px;top:458.00px;font-size:13px;line-height:15px;color:#000;transform:scaleX(0.9735);transform-origin:100% 50%;">1234699</span>
<span class="t " style="left:1382.00px;top:458.00px;font-size:13px;line-height:15px;color:#000;transform:scaleX(1.0207);">Passport</span>
<span class="t " style="left:1487.00px;top:458.00px;font-size:13px;line-height:15px;color:#000;transform:scaleX(0.9765);">29.08.2018</span>
<span class="t " style="left:1592.00px;top:458.00px;font-size:13px;line-height:15px;color:#000;transform:scaleX(0.9765);">28.08.2028</span>
<span class="t " style="left:1697.00px;top:458.00px;font-size:13px;line-height:15px;color:#000;transform:scaleX(0.9281);">ACTIVE</span>
<span class="t " style="left:1802.00px;top:458.00px;font-size:13px;line-height:15px;color:#000;transform:scaleX(1.0133);">Serbia</span>
<div class="b " style="left:1285px;top:494px;width:25px;height:1px;background:#c8c8c8;"></div>
<div class="b " style="left:1310px;top:494px;width:594px;height:1px;background:#000;"></div>
<span class="t " style="left:1290.57px;top:478.00px;font-size:13px;line-height:15px;color:#262626;transform:scaleX(0.9676);transform-origin:50% 50%;">15</span>
<span class="t " style="left:1326.16px;top:478.00px;font-size:13px;line-height:15px;color:#000;transform:scaleX(0.9735);transform-origin:100% 50%;">1234572</span>
<span class="t " style="left:1382.00px;top:478.00px;font-size:13px;line-height:15px;color:#000;transform:scaleX(1.0207);">Passport</span>
<span class="t " style="left:1592.00px;top:478.00px;font-size:13px;line-height:15px;color:#000;transform:scaleX(0.9765);">28.07.2020</span>
<span class="t " style="left:1697.00px;top:478.00px;font-size:13px;line-height:15px;color:#000;transform:scaleX(0.9515);">INACTIVE</span>
<span class="t " style="left:1802.00px;top:478.00px;font-size:13px;line-height:15px;color:#000;transform:scaleX(1.0562);">Australia</span>
<div class="b " style="left:1285px;top:514px;width:25px;height:1px;background:#c8c8c8;"></div>
<div class="b " style="left:1310px;top:514px;width:594px;height:1px;background:#000;"></div>
<span class="t " style="left:1290.57px;top:498.00px;font-size:13px;line-height:15px;color:#262626;transform:scaleX(0.9676);transform-origin:50% 50%;">16</span>
<span class="t " style="left:1326.16px;top:498.00px;font-size:13px;line-height:15px;color:#000;transform:scaleX(0.9735);transform-origin:100% 50%;">1234682</span>
<span class="t " style="left:1382.00px;top:498.00px;font-size:13px;line-height:15px;color:#000;transform:scaleX(1.0207);">Passport</span>
<span class="t " style="left:1592.00px;top:498.00px;font-size:13px;line-height:15px;color:#000;transform:scaleX(0.9765);">28.04.2022</span>
<span class="t " style="left:1697.00px;top:498.00px;font-size:13px;line-height:15px;color:#000;transform:scaleX(0.9281);">ACTIVE</span>
<span class="t " style="left:1802.00px;top:498.00px;font-size:13px;line-height:15px;color:#000;transform:scaleX(1.0376);">Croatia</span>
<div class="b " style="left:1285px;top:534px;width:25px;height:1px;background:#c8c8c8;"></div>
<div class="b " style="left:1310px;top:534px;width:594px;height:1px;background:#000;"></div>
<span class="t " style="left:1290.57px;top:518.00px;font-size:13px;line-height:15px;color:#262626;transform:scaleX(0.9676);transform-origin:50% 50%;">17</span>
<span class="t " style="left:1326.16px;top:518.00px;font-size:13px;line-height:15px;color:#000;transform:scaleX(0.9735);transform-origin:100% 50%;">1234679</span>
<span class="t " style="left:1382.00px;top:518.00px;font-size:13px;line-height:15px;color:#000;transform:scaleX(1.0207);">Passport</span>
<span class="t " style="left:1592.00px;top:518.00px;font-size:13px;line-height:15px;color:#000;transform:scaleX(0.9765);">28.02.2022</span>
<span class="t " style="left:1697.00px;top:518.00px;font-size:13px;line-height:15px;color:#000;transform:scaleX(0.9281);">ACTIVE</span>
<span class="t " style="left:1802.00px;top:518.00px;font-size:13px;line-height:15px;color:#000;transform:scaleX(1.0526);">Albania</span>
<div class="b " style="left:1285px;top:554px;width:25px;height:1px;background:#c8c8c8;"></div>
<div class="b " style="left:1310px;top:554px;width:594px;height:1px;background:#000;"></div>
<span class="t " style="left:1290.57px;top:538.00px;font-size:13px;line-height:15px;color:#262626;transform:scaleX(0.9676);transform-origin:50% 50%;">18</span>
<span class="t " style="left:1326.16px;top:538.00px;font-size:13px;line-height:15px;color:#000;transform:scaleX(0.9735);transform-origin:100% 50%;">1234630</span>
<span class="t " style="left:1382.00px;top:538.00px;font-size:13px;line-height:15px;color:#000;transform:scaleX(1.0207);">Passport</span>
<span class="t " style="left:1592.00px;top:538.00px;font-size:13px;line-height:15px;color:#000;transform:scaleX(0.9765);">27.09.2026</span>
<span class="t " style="left:1697.00px;top:538.00px;font-size:13px;line-height:15px;color:#000;transform:scaleX(0.9281);">ACTIVE</span>
<span class="t " style="left:1802.00px;top:538.00px;font-size:13px;line-height:15px;color:#000;transform:scaleX(1.0424);">Germany</span>
<div class="b " style="left:1285px;top:574px;width:25px;height:1px;background:#c8c8c8;"></div>
<div class="b " style="left:1310px;top:574px;width:594px;height:1px;background:#000;"></div>
<span class="t " style="left:1290.57px;top:558.00px;font-size:13px;line-height:15px;color:#262626;transform:scaleX(0.9676);transform-origin:50% 50%;">19</span>
<span class="t " style="left:1326.16px;top:558.00px;font-size:13px;line-height:15px;color:#000;transform:scaleX(0.9735);transform-origin:100% 50%;">1234599</span>
<span class="t " style="left:1382.00px;top:558.00px;font-size:13px;line-height:15px;color:#000;transform:scaleX(1.0207);">Passport</span>
<span class="t " style="left:1592.00px;top:558.00px;font-size:13px;line-height:15px;color:#000;transform:scaleX(0.9765);">27.06.2023</span>
<span class="t " style="left:1697.00px;top:558.00px;font-size:13px;line-height:15px;color:#000;transform:scaleX(0.9281);">ACTIVE</span>
<span class="t " style="left:1802.00px;top:558.00px;font-size:13px;line-height:15px;color:#000;transform:scaleX(1.0924);">Italy</span>
<div class="b " style="left:1285px;top:594px;width:25px;height:1px;background:#c8c8c8;"></div>
<div class="b " style="left:1310px;top:594px;width:594px;height:1px;background:#000;"></div>
<span class="t " style="left:1290.57px;top:578.00px;font-size:13px;line-height:15px;color:#262626;transform:scaleX(0.9676);transform-origin:50% 50%;">20</span>
<span class="t " style="left:1326.16px;top:578.00px;font-size:13px;line-height:15px;color:#000;transform:scaleX(0.9735);transform-origin:100% 50%;">1234614</span>
<span class="t " style="left:1382.00px;top:578.00px;font-size:13px;line-height:15px;color:#000;transform:scaleX(1.0207);">Passport</span>
<span class="t " style="left:1592.00px;top:578.00px;font-size:13px;line-height:15px;color:#000;transform:scaleX(0.9765);">27.05.2029</span>
<span class="t " style="left:1697.00px;top:578.00px;font-size:13px;line-height:15px;color:#000;transform:scaleX(0.9281);">ACTIVE</span>
<span class="t " style="left:1802.00px;top:578.00px;font-size:13px;line-height:15px;color:#000;transform:scaleX(1.0509);">Colombia</span>
<div class="b " style="left:1285px;top:614px;width:25px;height:1px;background:#c8c8c8;"></div>
<div class="b " style="left:1310px;top:614px;width:594px;height:1px;background:#000;"></div>
<span class="t " style="left:1290.57px;top:598.00px;font-size:13px;line-height:15px;color:#262626;transform:scaleX(0.9676);transform-origin:50% 50%;">21</span>
<span class="t " style="left:1326.16px;top:598.00px;font-size:13px;line-height:15px;color:#000;transform:scaleX(0.9735);transform-origin:100% 50%;">1234637</span>
<span class="t " style="left:1382.00px;top:598.00px;font-size:13px;line-height:15px;color:#000;transform:scaleX(1.0207);">Passport</span>
<span class="t " style="left:1592.00px;top:598.00px;font-size:13px;line-height:15px;color:#000;transform:scaleX(0.9765);">27.03.2023</span>
<span class="t " style="left:1697.00px;top:598.00px;font-size:13px;line-height:15px;color:#000;transform:scaleX(0.9281);">ACTIVE</span>
<span class="t " style="left:1802.00px;top:598.00px;font-size:13px;line-height:15px;color:#000;transform:scaleX(1.0646);">Argentina</span>
<div class="b " style="left:1285px;top:634px;width:25px;height:1px;background:#c8c8c8;"></div>
<div class="b " style="left:1310px;top:634px;width:594px;height:1px;background:#000;"></div>
<span class="t " style="left:1290.57px;top:618.00px;font-size:13px;line-height:15px;color:#262626;transform:scaleX(0.9676);transform-origin:50% 50%;">22</span>
<span class="t " style="left:1326.16px;top:618.00px;font-size:13px;line-height:15px;color:#000;transform:scaleX(0.9735);transform-origin:100% 50%;">1234590</span>
<span class="t " style="left:1382.00px;top:618.00px;font-size:13px;line-height:15px;color:#000;transform:scaleX(1.0207);">Passport</span>
<span class="t " style="left:1592.00px;top:618.00px;font-size:13px;line-height:15px;color:#000;transform:scaleX(0.9765);">27.03.2022</span>
<span class="t " style="left:1697.00px;top:618.00px;font-size:13px;line-height:15px;color:#000;transform:scaleX(0.9281);">ACTIVE</span>
<span class="t " style="left:1802.00px;top:618.00px;font-size:13px;line-height:15px;color:#000;transform:scaleX(1.0247);">Venezuela</span>
<div class="b " style="left:1285px;top:654px;width:25px;height:1px;background:#c8c8c8;"></div>
<div class="b " style="left:1310px;top:654px;width:594px;height:1px;background:#000;"></div>
<span class="t " style="left:1290.57px;top:638.00px;font-size:13px;line-height:15px;color:#262626;transform:scaleX(0.9676);transform-origin:50% 50%;">23</span>
<span class="t " style="left:1326.16px;top:638.00px;font-size:13px;line-height:15px;color:#000;transform:scaleX(0.9735);transform-origin:100% 50%;">1234623</span>
<span class="t " style="left:1382.00px;top:638.00px;font-size:13px;line-height:15px;color:#000;transform:scaleX(1.0207);">Passport</span>
<span class="t " style="left:1592.00px;top:638.00px;font-size:13px;line-height:15px;color:#000;transform:scaleX(0.9765);">27.02.2025</span>
<span class="t " style="left:1697.00px;top:638.00px;font-size:13px;line-height:15px;color:#000;transform:scaleX(0.9281);">ACTIVE</span>
<span class="t " style="left:1802.00px;top:638.00px;font-size:13px;line-height:15px;color:#000;">El Salvador</span>
<div class="b " style="left:1285px;top:674px;width:25px;height:1px;background:#c8c8c8;"></div>
<div class="b " style="left:1310px;top:674px;width:594px;height:1px;background:#000;"></div>
<span class="t " style="left:1290.57px;top:658.00px;font-size:13px;line-height:15px;color:#262626;transform:scaleX(0.9676);transform-origin:50% 50%;">24</span>
<span class="t " style="left:1326.16px;top:658.00px;font-size:13px;line-height:15px;color:#000;transform:scaleX(0.9735);transform-origin:100% 50%;">1234674</span>
<span class="t " style="left:1382.00px;top:658.00px;font-size:13px;line-height:15px;color:#000;transform:scaleX(1.0207);">Passport</span>
<span class="t " style="left:1592.00px;top:658.00px;font-size:13px;line-height:15px;color:#000;transform:scaleX(0.9912);">26.11.2021</span>
<span class="t " style="left:1697.00px;top:658.00px;font-size:13px;line-height:15px;color:#000;transform:scaleX(0.9281);">ACTIVE</span>
<span class="t " style="left:1802.00px;top:658.00px;font-size:13px;line-height:15px;color:#000;transform:scaleX(0.9380);">USA</span>
<div class="b " style="left:1285px;top:694px;width:25px;height:1px;background:#c8c8c8;"></div>
<div class="b " style="left:1310px;top:694px;width:594px;height:1px;background:#000;"></div>
<span class="t " style="left:1290.57px;top:678.00px;font-size:13px;line-height:15px;color:#262626;transform:scaleX(0.9676);transform-origin:50% 50%;">25</span>
<span class="t " style="left:1326.16px;top:678.00px;font-size:13px;line-height:15px;color:#000;transform:scaleX(0.9735);transform-origin:100% 50%;">1234631</span>
<span class="t " style="left:1382.00px;top:678.00px;font-size:13px;line-height:15px;color:#000;transform:scaleX(1.0207);">Passport</span>
<span class="t " style="left:1592.00px;top:678.00px;font-size:13px;line-height:15px;color:#000;transform:scaleX(0.9765);">26.06.2023</span>
<span class="t " style="left:1697.00px;top:678.00px;font-size:13px;line-height:15px;color:#000;transform:scaleX(0.9281);">ACTIVE</span>
<span class="t " style="left:1802.00px;top:678.00px;font-size:13px;line-height:15px;color:#000;transform:scaleX(1.0054);">France</span>
<div class="b " style="left:1285px;top:714px;width:25px;height:1px;background:#c8c8c8;"></div>
<div class="b " style="left:1310px;top:714px;width:594px;height:1px;background:#000;"></div>
<span class="t " style="left:1290.57px;top:698.00px;font-size:13px;line-height:15px;color:#262626;transform:scaleX(0.9676);transform-origin:50% 50%;">26</span>
<span class="t " style="left:1326.16px;top:698.00px;font-size:13px;line-height:15px;color:#000;transform:scaleX(0.9735);transform-origin:100% 50%;">1234709</span>
<span class="t " style="left:1382.00px;top:698.00px;font-size:13px;line-height:15px;color:#000;transform:scaleX(1.0207);">Passport</span>
<span class="t " style="left:1487.00px;top:698.00px;font-size:13px;line-height:15px;color:#000;transform:scaleX(0.9765);">26.06.2019</span>
<span class="t " style="left:1592.00px;top:698.00px;font-size:13px;line-height:15px;color:#000;transform:scaleX(0.9765);">26.06.2022</span>
<span class="t " style="left:1697.00px;top:698.00px;font-size:13px;line-height:15px;color:#000;transform:scaleX(0.9281);">ACTIVE</span>
<span class="t " style="left:1802.00px;top:698.00px;font-size:13px;line-height:15px;color:#000;transform:scaleX(0.9645);">UK</span>
<div class="b " style="left:1285px;top:734px;width:25px;height:1px;background:#c8c8c8;"></div>
<div class="b " style="left:1310px;top:734px;width:594px;height:1px;background:#000;"></div>
<span class="t " style="left:1290.57px;top:718.00px;font-size:13px;line-height:15px;color:#262626;transform:scaleX(0.9676);transform-origin:50% 50%;">27</span>
<span class="t " style="left:1326.16px;top:718.00px;font-size:13px;line-height:15px;color:#000;transform:scaleX(0.9735);transform-origin:100% 50%;">1234603</span>
<span class="t " style="left:1382.00px;top:718.00px;font-size:13px;line-height:15px;color:#000;transform:scaleX(1.0207);">Passport</span>
<span class="t " style="left:1487.00px;top:718.00px;font-size:13px;line-height:15px;color:#000;transform:scaleX(0.9765);">26.02.2016</span>
<span class="t " style="left:1592.00px;top:718.00px;font-size:13px;line-height:15px;color:#000;transform:scaleX(0.9765);">26.02.2026</span>
<span class="t " style="left:1697.00px;top:718.00px;font-size:13px;line-height:15px;color:#000;transform:scaleX(0.9281);">ACTIVE</span>
<span class="t " style="left:1802.00px;top:718.00px;font-size:13px;line-height:15px;color:#000;transform:scaleX(1.0968);">Montenegro</span>
<div class="b " style="left:1285px;top:754px;width:25px;height:1px;background:#c8c8c8;"></div>
<div class="b " style="left:1310px;top:754px;width:594px;height:1px;background:#000;"></div>
<span class="t " style="left:1290.57px;top:738.00px;font-size:13px;line-height:15px;color:#262626;transform:scaleX(0.9676);transform-origin:50% 50%;">28</span>
<span class="t " style="left:1326.16px;top:738.00px;font-size:13px;line-height:15px;color:#000;transform:scaleX(0.9735);transform-origin:100% 50%;">1234672</span>
<span class="t " style="left:1382.00px;top:738.00px;font-size:13px;line-height:15px;color:#000;transform:scaleX(1.0207);">Passport</span>
<span class="t " style="left:1592.00px;top:738.00px;font-size:13px;line-height:15px;color:#000;transform:scaleX(0.9765);">25.07.2022</span>
<span class="t " style="left:1697.00px;top:738.00px;font-size:13px;line-height:15px;color:#000;transform:scaleX(0.9281);">ACTIVE</span>
<span class="t " style="left:1802.00px;top:738.00px;font-size:13px;line-height:15px;color:#000;transform:scaleX(1.0133);">Serbia</span>
<div class="b " style="left:1285px;top:774px;width:25px;height:1px;background:#c8c8c8;"></div>
<div class="b " style="left:1310px;top:774px;width:594px;height:1px;background:#000;"></div>
<span class="t " style="left:1290.57px;top:758.00px;font-size:13px;line-height:15px;color:#262626;transform:scaleX(0.9676);transform-origin:50% 50%;">29</span>
<span class="t " style="left:1326.16px;top:758.00px;font-size:13px;line-height:15px;color:#000;transform:scaleX(0.9735);transform-origin:100% 50%;">1234617</span>
<span class="t " style="left:1382.00px;top:758.00px;font-size:13px;line-height:15px;color:#000;transform:scaleX(1.0207);">Passport</span>
<span class="t " style="left:1487.00px;top:758.00px;font-size:13px;line-height:15px;color:#000;transform:scaleX(0.9765);">25.05.2016</span>
<span class="t " style="left:1592.00px;top:758.00px;font-size:13px;line-height:15px;color:#000;transform:scaleX(0.9765);">25.05.2021</span>
<span class="t " style="left:1697.00px;top:758.00px;font-size:13px;line-height:15px;color:#000;transform:scaleX(0.9281);">ACTIVE</span>
<span class="t " style="left:1802.00px;top:758.00px;font-size:13px;line-height:15px;color:#000;transform:scaleX(1.0562);">Australia</span>
<div class="b " style="left:1285px;top:794px;width:25px;height:1px;background:#c8c8c8;"></div>
<div class="b " style="left:1310px;top:794px;width:594px;height:1px;background:#000;"></div>
<span class="t " style="left:1290.57px;top:778.00px;font-size:13px;line-height:15px;color:#262626;transform:scaleX(0.9676);transform-origin:50% 50%;">30</span>
<span class="t " style="left:1326.16px;top:778.00px;font-size:13px;line-height:15px;color:#000;transform:scaleX(0.9735);transform-origin:100% 50%;">1234618</span>
<span class="t " style="left:1382.00px;top:778.00px;font-size:13px;line-height:15px;color:#000;transform:scaleX(1.0207);">Passport</span>
<span class="t " style="left:1487.00px;top:778.00px;font-size:13px;line-height:15px;color:#000;transform:scaleX(0.9765);">25.05.2016</span>
<span class="t " style="left:1592.00px;top:778.00px;font-size:13px;line-height:15px;color:#000;transform:scaleX(0.9765);">25.05.2021</span>
<span class="t " style="left:1697.00px;top:778.00px;font-size:13px;line-height:15px;color:#000;transform:scaleX(0.9281);">ACTIVE</span>
<span class="t " style="left:1802.00px;top:778.00px;font-size:13px;line-height:15px;color:#000;transform:scaleX(1.0376);">Croatia</span>
<div class="b " style="left:1285px;top:814px;width:25px;height:1px;background:#c8c8c8;"></div>
<div class="b " style="left:1310px;top:814px;width:594px;height:1px;background:#000;"></div>
<span class="t " style="left:1290.57px;top:798.00px;font-size:13px;line-height:15px;color:#262626;transform:scaleX(0.9676);transform-origin:50% 50%;">31</span>
<span class="t " style="left:1326.16px;top:798.00px;font-size:13px;line-height:15px;color:#000;transform:scaleX(0.9735);transform-origin:100% 50%;">1234683</span>
<span class="t " style="left:1382.00px;top:798.00px;font-size:13px;line-height:15px;color:#000;transform:scaleX(1.0207);">Passport</span>
<span class="t " style="left:1592.00px;top:798.00px;font-size:13px;line-height:15px;color:#000;transform:scaleX(0.9765);">25.04.2022</span>
<span class="t " style="left:1697.00px;top:798.00px;font-size:13px;line-height:15px;color:#000;transform:scaleX(0.9281);">ACTIVE</span>
<span class="t " style="left:1802.00px;top:798.00px;font-size:13px;line-height:15px;color:#000;transform:scaleX(1.0526);">Albania</span>
<div class="b " style="left:1285px;top:834px;width:25px;height:1px;background:#c8c8c8;"></div>
<div class="b " style="left:1310px;top:834px;width:594px;height:1px;background:#000;"></div>
<span class="t " style="left:1290.57px;top:818.00px;font-size:13px;line-height:15px;color:#262626;transform:scaleX(0.9676);transform-origin:50% 50%;">32</span>
<span class="t " style="left:1326.16px;top:818.00px;font-size:13px;line-height:15px;color:#000;transform:scaleX(0.9735);transform-origin:100% 50%;">1234701</span>
<span class="t " style="left:1382.00px;top:818.00px;font-size:13px;line-height:15px;color:#000;transform:scaleX(1.0207);">Passport</span>
<span class="t " style="left:1592.00px;top:818.00px;font-size:13px;line-height:15px;color:#000;transform:scaleX(0.9765);">25.02.2025</span>
<span class="t " style="left:1697.00px;top:818.00px;font-size:13px;line-height:15px;color:#000;transform:scaleX(0.9281);">ACTIVE</span>
<span class="t " style="left:1802.00px;top:818.00px;font-size:13px;line-height:15px;color:#000;transform:scaleX(1.0424);">Germany</span>
<div class="b " style="left:1285px;top:854px;width:25px;height:1px;background:#c8c8c8;"></div>
<div class="b " style="left:1310px;top:854px;width:594px;height:1px;background:#000;"></div>
<span class="t " style="left:1290.57px;top:838.00px;font-size:13px;line-height:15px;color:#262626;transform:scaleX(0.9676);transform-origin:50% 50%;">33</span>
<span class="t " style="left:1326.16px;top:838.00px;font-size:13px;line-height:15px;color:#000;transform:scaleX(0.9735);transform-origin:100% 50%;">1234707</span>
<span class="t " style="left:1382.00px;top:838.00px;font-size:13px;line-height:15px;color:#000;transform:scaleX(1.0207);">Passport</span>
<span class="t " style="left:1487.00px;top:838.00px;font-size:13px;line-height:15px;color:#000;transform:scaleX(0.9765);">24.10.2017</span>
<span class="t " style="left:1592.00px;top:838.00px;font-size:13px;line-height:15px;color:#000;transform:scaleX(0.9765);">24.10.2027</span>
<span class="t " style="left:1697.00px;top:838.00px;font-size:13px;line-height:15px;color:#000;transform:scaleX(0.9281);">ACTIVE</span>
<span class="t " style="left:1802.00px;top:838.00px;font-size:13px;line-height:15px;color:#000;transform:scaleX(1.0924);">Italy</span>
<div class="b " style="left:1285px;top:855px;width:25px;height:19px;background:#d2d2d2;"></div>
<div class="b " style="left:1308px;top:854px;width:2px;height:21px;background:#217346;"></div>
<div class="b " style="left:1285px;top:874px;width:25px;height:1px;background:#c8c8c8;"></div>
<div class="b " style="left:1310px;top:874px;width:594px;height:1px;background:#000;"></div>
<span class="t " style="left:1290.57px;top:858.00px;font-size:13px;line-height:15px;color:#217346;transform:scaleX(0.9676);transform-origin:50% 50%;">34</span>
<span class="t " style="left:1326.16px;top:858.00px;font-size:13px;line-height:15px;color:#000;transform:scaleX(0.9735);transform-origin:100% 50%;">1234639</span>
<span class="t " style="left:1382.00px;top:858.00px;font-size:13px;line-height:15px;color:#000;transform:scaleX(1.0207);">Passport</span>
<span class="t " style="left:1592.00px;top:858.00px;font-size:13px;line-height:15px;color:#000;transform:scaleX(0.9765);">24.09.2026</span>
<span class="t " style="left:1697.00px;top:858.00px;font-size:13px;line-height:15px;color:#000;transform:scaleX(0.9281);">ACTIVE</span>
<span class="t " style="left:1802.00px;top:858.00px;font-size:13px;line-height:15px;color:#000;transform:scaleX(1.0509);">Colombia</span>
<div class="b " style="left:1285px;top:894px;width:25px;height:1px;background:#c8c8c8;"></div>
<div class="b " style="left:1310px;top:894px;width:594px;height:1px;background:#000;"></div>
<span class="t " style="left:1290.57px;top:878.00px;font-size:13px;line-height:15px;color:#262626;transform:scaleX(0.9676);transform-origin:50% 50%;">35</span>
<span class="t " style="left:1326.16px;top:878.00px;font-size:13px;line-height:15px;color:#000;transform:scaleX(0.9735);transform-origin:100% 50%;">1234662</span>
<span class="t " style="left:1382.00px;top:878.00px;font-size:13px;line-height:15px;color:#000;transform:scaleX(1.0207);">Passport</span>
<span class="t " style="left:1487.00px;top:878.00px;font-size:13px;line-height:15px;color:#000;transform:scaleX(0.9765);">25.09.2015</span>
<span class="t " style="left:1592.00px;top:878.00px;font-size:13px;line-height:15px;color:#000;transform:scaleX(0.9765);">24.09.2025</span>
<span class="t " style="left:1697.00px;top:878.00px;font-size:13px;line-height:15px;color:#000;transform:scaleX(0.9281);">ACTIVE</span>
<span class="t " style="left:1802.00px;top:878.00px;font-size:13px;line-height:15px;color:#000;transform:scaleX(1.0646);">Argentina</span>
<div class="b " style="left:1285px;top:914px;width:25px;height:1px;background:#c8c8c8;"></div>
<div class="b " style="left:1310px;top:914px;width:594px;height:1px;background:#000;"></div>
<span class="t " style="left:1290.57px;top:898.00px;font-size:13px;line-height:15px;color:#262626;transform:scaleX(0.9676);transform-origin:50% 50%;">36</span>
<span class="t " style="left:1326.16px;top:898.00px;font-size:13px;line-height:15px;color:#000;transform:scaleX(0.9735);transform-origin:100% 50%;">1234681</span>
<span class="t " style="left:1382.00px;top:898.00px;font-size:13px;line-height:15px;color:#000;transform:scaleX(1.0207);">Passport</span>
<span class="t " style="left:1487.00px;top:898.00px;font-size:13px;line-height:15px;color:#000;transform:scaleX(0.9765);">25.09.2017</span>
<span class="t " style="left:1592.00px;top:898.00px;font-size:13px;line-height:15px;color:#000;transform:scaleX(0.9765);">24.09.2022</span>
<span class="t " style="left:1697.00px;top:898.00px;font-size:13px;line-height:15px;color:#000;transform:scaleX(0.9281);">ACTIVE</span>
<span class="t " style="left:1802.00px;top:898.00px;font-size:13px;line-height:15px;color:#000;transform:scaleX(1.0376);">Croatia</span>
<div class="b " style="left:1285px;top:934px;width:25px;height:1px;background:#c8c8c8;"></div>
<div class="b " style="left:1310px;top:934px;width:594px;height:1px;background:#000;"></div>
<span class="t " style="left:1290.57px;top:918.00px;font-size:13px;line-height:15px;color:#262626;transform:scaleX(0.9676);transform-origin:50% 50%;">37</span>
<span class="t " style="left:1326.16px;top:918.00px;font-size:13px;line-height:15px;color:#000;transform:scaleX(0.9735);transform-origin:100% 50%;">1234579</span>
<span class="t " style="left:1382.00px;top:918.00px;font-size:13px;line-height:15px;color:#000;transform:scaleX(1.0207);">Passport</span>
<span class="t " style="left:1592.00px;top:918.00px;font-size:13px;line-height:15px;color:#000;transform:scaleX(0.9765);">24.07.2027</span>
<span class="t " style="left:1697.00px;top:918.00px;font-size:13px;line-height:15px;color:#000;transform:scaleX(0.9281);">ACTIVE</span>
<span class="t " style="left:1802.00px;top:918.00px;font-size:13px;line-height:15px;color:#000;transform:scaleX(1.0526);">Albania</span>
<span class="t " style="left:1290.57px;top:938.00px;font-size:13px;line-height:15px;color:#262626;transform:scaleX(0.9676);transform-origin:50% 50%;">38</span>
<span class="t " style="left:1326.16px;top:938.00px;font-size:13px;line-height:15px;color:#000;transform:scaleX(0.9735);transform-origin:100% 50%;">1234626</span>
<span class="t " style="left:1382.00px;top:938.00px;font-size:13px;line-height:15px;color:#000;transform:scaleX(1.0207);">Passport</span>
<span class="t " style="left:1592.00px;top:938.00px;font-size:13px;line-height:15px;color:#000;transform:scaleX(0.9765);">24.05.2022</span>
<span class="t " style="left:1697.00px;top:938.00px;font-size:13px;line-height:15px;color:#000;transform:scaleX(0.9281);">ACTIVE</span>
<span class="t " style="left:1802.00px;top:938.00px;font-size:13px;line-height:15px;color:#000;transform:scaleX(1.0424);">Germany</span>
<div class="b " style="left:1285px;top:214px;width:1917px;height:1px;background:#9e9e9e;"></div>
<div class="b " style="left:1379px;top:195px;width:1px;height:756px;background:#000;"></div>
<div class="b " style="left:1484px;top:195px;width:1px;height:756px;background:#000;"></div>
<div class="b " style="left:1589px;top:195px;width:1px;height:756px;background:#000;"></div>
<div class="b " style="left:1694px;top:195px;width:1px;height:756px;background:#000;"></div>
<div class="b " style="left:1799px;top:195px;width:1px;height:756px;background:#000;"></div>
<div class="b " style="left:1904px;top:195px;width:1px;height:756px;background:#000;"></div>
<div class="b " style="left:1693px;top:853px;width:108px;height:23px;border:2px solid #217346;"></div>
<div class="b " style="left:1796px;top:871px;width:6px;height:6px;background:#217346;border-top:1px solid #fff;border-left:1px solid #fff;"></div>
<div class="b " style="left:1285px;top:950px;width:1917px;height:52px;background:#e6e6e6;"></div>
<div class="b " style="left:1285px;top:950px;width:1917px;height:1px;background:#c6c6c6;"></div>
<div class="b " style="left:1285px;top:978px;width:1917px;height:1px;background:#c6c6c6;"></div>
<div class="b " style="left:1285px;top:979px;width:1917px;height:21px;background:#f1f1f1;"></div>
<svg class="b" style="left:1311px;top:959px" width="6" height="9" viewBox="0 0 6 9"><path d="M5.5 0.5V8.5L0.5 4.5Z" fill="#c6c6c6"/></svg>
<svg class="b" style="left:1339px;top:959px" width="6" height="9" viewBox="0 0 6 9"><path d="M0.5 0.5V8.5L5.5 4.5Z" fill="#c6c6c6"/></svg>
<div class="b " style="left:1385px;top:950px;width:54px;height:24.5px;background:#fff;border-left:1px solid #c6c6c6;border-right:1px solid #c6c6c6;border-bottom:2.5px solid #217346;"></div>
<span class="t " style="left:1397.91px;top:956.00px;font-size:13px;line-height:15px;color:#217346;font-weight:bold;transform:scaleX(1.0466);transform-origin:50% 50%;">Data</span>
<span class="t " style="left:1451.00px;top:956.00px;font-size:13px;line-height:15px;color:#444;transform:scaleX(0.9747);">Parameters</span>
<div class="b " style="left:1530px;top:954px;width:1px;height:20px;background:#ababab;"></div>
<svg class="b" style="left:1564px;top:955.5px" width="16" height="16" viewBox="0 0 16 16"><circle cx="8" cy="8" r="7.2" fill="none" stroke="#777" stroke-width="1.1"/><path d="M8 4.2V11.8M4.2 8H11.8" stroke="#666" stroke-width="1.5"/></svg>
<span class="t " style="left:1292.00px;top:983.00px;font-size:11.5px;line-height:12px;color:#444444;transform:scaleX(0.9177);">Ready</span>
<div class="b " style="left:1306px;top:190px;width:604px;height:768px;border:5px solid #ed1c24;"></div>
<div class="b " style="left:1284px;top:3px;width:1px;height:998px;background:#217346;"></div>
<div class="b " style="left:1284px;top:1000px;width:633px;height:1px;background:#217346;"></div>
</div>
</div>
</body></html>
